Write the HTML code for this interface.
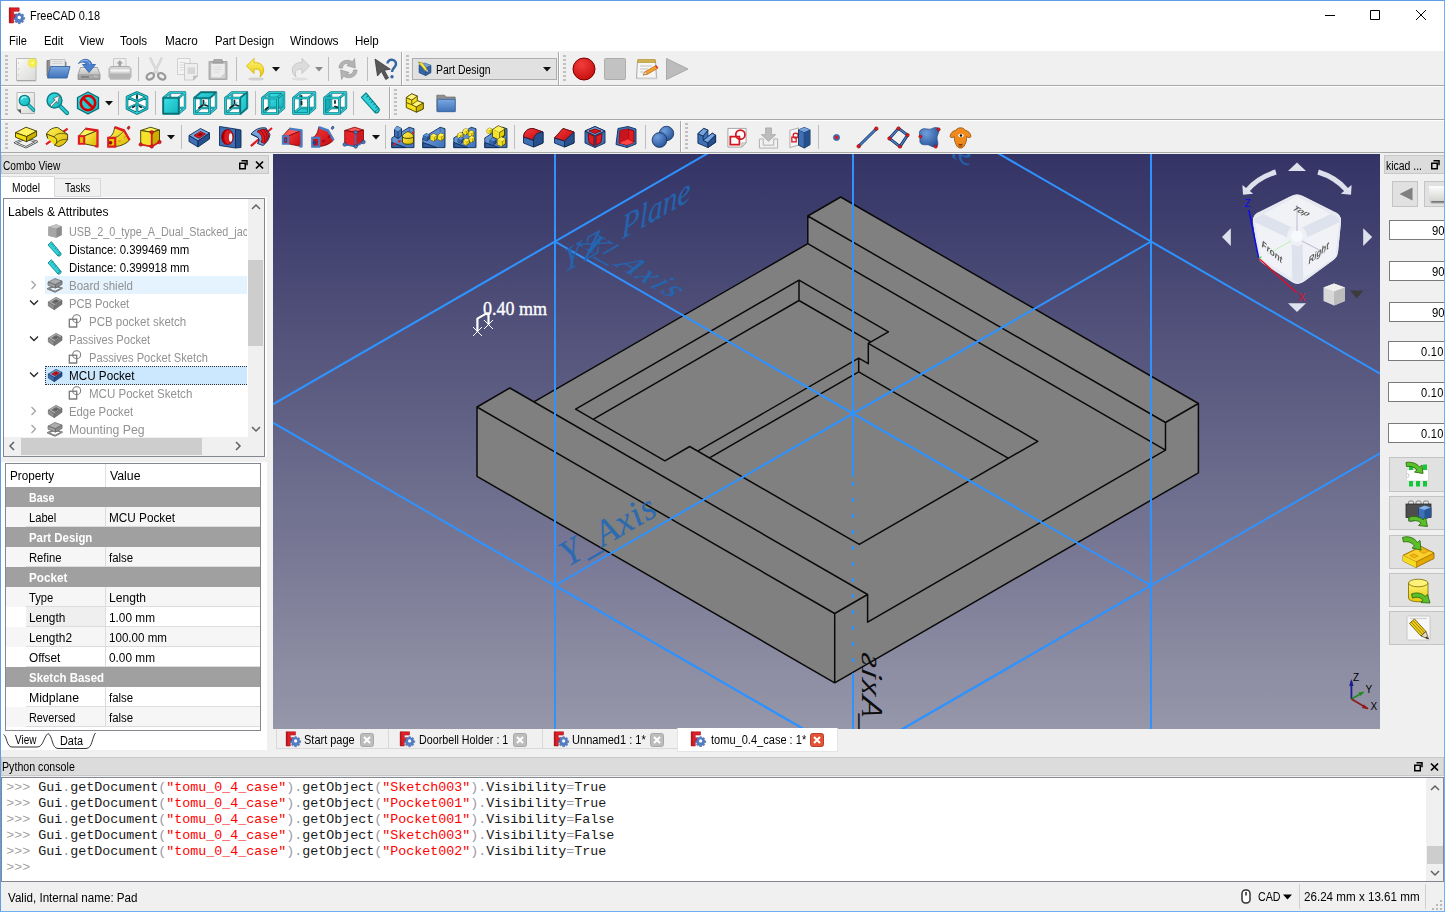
<!DOCTYPE html>
<html lang="en">
<head>
<meta charset="utf-8">
<title>FreeCAD 0.18</title>
<style>
*{box-sizing:border-box;margin:0;padding:0}
html,body{width:1445px;height:912px;overflow:hidden;background:#f0f0f0}
body{font-family:"Liberation Sans",sans-serif;font-size:12px;color:#000;position:relative}
.abs{position:absolute}
.t{position:absolute;white-space:nowrap;line-height:16px;height:16px}
svg{position:absolute;overflow:visible}
#win{position:absolute;left:0;top:0;width:1445px;height:912px;border-left:1px solid #5e9ee6;border-top:1px solid #5e9ee6;border-right:1px solid #6fb0f2;border-bottom:1px solid #6fb0f2}
#title{position:absolute;left:1px;top:1px;width:1443px;height:29px;background:#fff}
#menu{position:absolute;left:1px;top:30px;width:1443px;height:21px;background:#fff}
#menu .t{font-size:13px;top:3px}
.tbsep{position:absolute;left:1px;width:1443px;height:2px;border-top:1px solid #a8a8a8;border-bottom:1px solid #fff}
.vsep{position:absolute;width:1px;background:#bdbdbd}
.grip{position:absolute;width:3px;background:repeating-linear-gradient(180deg,#c0c0c0 0,#c0c0c0 2px,transparent 2px,transparent 4px)}
.con{font-family:"Liberation Mono",monospace;font-size:13.33px;white-space:pre}
.t{transform-origin:0 50%}
.docktitle{position:absolute;background:#dcdcdc;border:1px solid #c8c8c8;height:19px}
</style>
</head>
<body>
<div id="title"></div><div id="menu"></div>
<svg style="left:8px;top:7px" width="17" height="17" viewBox="0 0 16 16"><path d="M1.200 0.800h9.300v3.300H5.300v2.700h3.400v3.100H5.300V15H1.200z" fill="#e21f26" stroke="#8e1116" stroke-width=".5"/><path d="M1.200 0.800h1.300V15H1.200z" fill="#a8141a"/><g transform="translate(10.6,9.900) scale(.82)"><path d="M-1-5.200h2l.3 1.300 1.200.5 1.200-.8 1.400 1.400-.8 1.200.5 1.200 1.400.3v2l-1.400.3-.5 1.200.8 1.200-1.400 1.400-1.200-.8-1.200.5-.3 1.400h-2l-.3-1.400-1.200-.5-1.200.8-1.400-1.400.8-1.200-.5-1.200-1.400-.3v-2l1.400-.3.5-1.200-.8-1.200 1.400-1.400 1.200.8 1.200-.5z" fill="#557fc4" stroke="#2c4f8c" stroke-width=".5"/><circle r="1.900" fill="#fff"/></g></svg>
<div class="t" style="left:30.0px;top:8.3px;font-size:12.5px;transform:scaleX(0.8762);">FreeCAD 0.18</div>
<svg style="left:1325px;top:10px" width="110" height="14" viewBox="0 0 110 14"><path d="M0 5.500h10M45.500 0.500h9v9h-9zM91 0l10 10M101 0l-10 10" fill="none" stroke="#000" stroke-width="1"/></svg>
<div class="t" style="left:9.1px;top:32.5px;font-size:12.5px;transform:scaleX(0.8838);">File</div>
<div class="t" style="left:43.5px;top:32.5px;font-size:12.5px;transform:scaleX(0.8960);">Edit</div>
<div class="t" style="left:78.9px;top:32.5px;font-size:12.5px;transform:scaleX(0.9268);">View</div>
<div class="t" style="left:120.4px;top:32.5px;font-size:12.5px;transform:scaleX(0.9287);">Tools</div>
<div class="t" style="left:164.7px;top:32.5px;font-size:12.5px;transform:scaleX(0.9416);">Macro</div>
<div class="t" style="left:214.5px;top:32.5px;font-size:12.5px;transform:scaleX(0.9034);">Part Design</div>
<div class="t" style="left:290.0px;top:32.5px;font-size:12.5px;transform:scaleX(0.9565);">Windows</div>
<div class="t" style="left:355.4px;top:32.5px;font-size:12.5px;transform:scaleX(0.9258);">Help</div>
<svg width="0" height="0" style="position:absolute"><defs>
<linearGradient id="gPage" x1="0" y1="0" x2="1" y2="1"><stop offset="0" stop-color="#fbfbfb"/><stop offset="1" stop-color="#d9d9d6"/></linearGradient>
<linearGradient id="gBlueF" x1="0" y1="0" x2="0" y2="1"><stop offset="0" stop-color="#7ca8e0"/><stop offset="1" stop-color="#3f72bb"/></linearGradient>
<linearGradient id="gGrayV" x1="0" y1="0" x2="0" y2="1"><stop offset="0" stop-color="#e6e6e6"/><stop offset="1" stop-color="#a8a8a8"/></linearGradient>
<linearGradient id="gYel" x1="0" y1="0" x2="1" y2="1"><stop offset="0" stop-color="#fff15a"/><stop offset="1" stop-color="#d9b800"/></linearGradient>
<linearGradient id="gYelV" x1="0" y1="0" x2="0" y2="1"><stop offset="0" stop-color="#fff676"/><stop offset="1" stop-color="#e6c60a"/></linearGradient>
<linearGradient id="gRed" x1="0" y1="0" x2="1" y2="1"><stop offset="0" stop-color="#f33a3a"/><stop offset="1" stop-color="#c40810"/></linearGradient>
<linearGradient id="gBlue" x1="0" y1="0" x2="1" y2="1"><stop offset="0" stop-color="#6c9bd6"/><stop offset="1" stop-color="#2f5c9e"/></linearGradient>
<linearGradient id="gBlueL" x1="0" y1="0" x2="1" y2="1"><stop offset="0" stop-color="#7dabe4"/><stop offset="1" stop-color="#3d6fb8"/></linearGradient>
<linearGradient id="gBlueD" x1="0" y1="0" x2="1" y2="1"><stop offset="0" stop-color="#3d6cb0"/><stop offset="1" stop-color="#234a86"/></linearGradient>
<linearGradient id="gCyan" x1="0" y1="0" x2="1" y2="1"><stop offset="0" stop-color="#3be0e6"/><stop offset="1" stop-color="#15b4bc"/></linearGradient>
<radialGradient id="gGlow"><stop offset="0" stop-color="#ffffc0"/><stop offset=".45" stop-color="#f4ec30"/><stop offset="1" stop-color="#f4ec30" stop-opacity="0"/></radialGradient>
<radialGradient id="gBall" cx=".35" cy=".3" r=".8"><stop offset="0" stop-color="#6f9ede"/><stop offset="1" stop-color="#224f94"/></radialGradient>
<radialGradient id="gRec" cx=".4" cy=".3" r=".8"><stop offset="0" stop-color="#f23c3c"/><stop offset="1" stop-color="#c20a0a"/></radialGradient>
</defs></svg>
<div class="tbsep" style="top:85px"></div>
<div class="tbsep" style="top:119px"></div>
<div class="abs" style="left:1px;top:152px;width:1443px;height:1px;background:#a8a8a8"></div>
<div class="grip" style="left:5px;top:55px;height:28px"></div>
<svg style="left:15px;top:57px" width="24" height="24" viewBox="0 0 24 24"><path d="M1.500 1.500h19.500v22H1.500z" fill="url(#gPage)" stroke="#b4b4b4" stroke-width=".9"/><path d="M2 23.800h19" stroke="#9a9a9a" stroke-width=".8"/><path d="M3.500 5v2M3.500 11v2M3.500 17v2" stroke="#d0d0d0" stroke-width="1"/><circle cx="17.500" cy="6" r="6" fill="url(#gGlow)"/></svg>
<svg style="left:46px;top:57px" width="24" height="24" viewBox="0 0 24 24"><path d="M1 3.500h7.500l1.500 1.500h10v14H1z" fill="#8f8f8f" stroke="#6a6a6a" stroke-width=".8"/><path d="M4 2.500h15v11H4z" fill="#e8e8e8" stroke="#aaa" stroke-width=".6"/><path d="M6.500 4.500h10M6.500 6.500h10" stroke="#c8c8c8" stroke-width=".7"/><path d="M4.500 9.500h19.500l-3 11.500H1.500z" fill="url(#gBlueF)" stroke="#3465a4" stroke-width=".9"/></svg>
<svg style="left:77px;top:57px" width="24" height="24" viewBox="0 0 24 24"><path d="M3.500 10.500L1 17.500v5h22v-5L20.500 10.500z" fill="url(#gGrayV)" stroke="#9a9a9a" stroke-width=".9"/><path d="M1.500 17.800h21v4.200h-21z" fill="#a9a9a9" stroke="#8e8e8e" stroke-width=".6"/><path d="M4 20h8" stroke="#707070" stroke-width="1.300"/><path d="M17 19.300h3.500" stroke="#c8c8c8" stroke-width="1"/><path d="M1.500 6.500C4.500 1 13 .5 15 7.500h3.500L12 15.500 5.500 7.500H9C8 4.500 5 4.500 1.500 6.500z" fill="#4a80d0" stroke="#2a5aa4" stroke-width=".8" stroke-linejoin="round"/><path d="M3.500 5C6.500 2.500 11.500 2.500 13 7" stroke="#9cc0f0" stroke-width="1" fill="none"/></svg>
<svg style="left:108px;top:57px" width="24" height="24" viewBox="0 0 24 24"><path d="M5.500 1.500h12.500v9H5.500z" fill="#eeeeee" stroke="#c2c2c2" stroke-width=".8"/><path d="M11.800 3.200l3.200 3.300h-1.900v2.500h-2.600V6.500H8.600z" fill="#a2a2a2"/><path d="M4 9.500h16c2 0 3 1.500 3 3.500v6.500c0 1-.5 1.500-1.500 1.500h-19C1.500 21 1 20.500 1 19.500V13c0-2 1-3.500 3-3.500z" fill="#d4d4d4" stroke="#a8a8a8" stroke-width=".9"/><path d="M1.500 16.500h21v3.500c0 .6-.4 1-1 1h-19c-.6 0-1-.4-1-1z" fill="#b4b4b4"/><path d="M3.500 13.500h17" stroke="#f6f6f6" stroke-width="2" stroke-linecap="round"/><path d="M2 22h20" stroke="#9c9c9c" stroke-width="1"/></svg>
<div class="vsep" style="left:137.5px;top:57px;height:24px"></div>
<svg style="left:144px;top:57px" width="24" height="24" viewBox="0 0 24 24"><path d="M6.500 1.500l7 14M17.500 1.500l-7 14" stroke="#cdcdcd" stroke-width="2.300" fill="none" stroke-linecap="round"/><path d="M6.500 1.500l7 14M17.500 1.500l-7 14" stroke="#e4e4e4" stroke-width=".8" fill="none"/><ellipse cx="6.300" cy="19.300" rx="4" ry="2.900" fill="none" stroke="#9a9a9a" stroke-width="2.200" transform="rotate(-32 6.300 19.300)"/><ellipse cx="17.700" cy="19.300" rx="4" ry="2.900" fill="none" stroke="#9a9a9a" stroke-width="2.200" transform="rotate(32 17.700 19.300)"/></svg>
<svg style="left:175px;top:57px" width="24" height="24" viewBox="0 0 24 24"><path d="M2.500 1.500h12.500v16H2.500z" fill="#f4f4f4" stroke="#c8c8c8" stroke-width=".8"/><path d="M4.500 5.500h6M4.500 8h5M4.500 10.500h5M4.500 13h5" stroke="#d4d4d4" stroke-width=".8"/><path d="M9.500 6.500h13v12.500L18.500 23H9.500z" fill="#eeeeee" stroke="#c2c2c2" stroke-width=".8"/><path d="M12.500 10.500h7.500v6.500h-7.500z" fill="#d6d6d6"/><path d="M22.500 19h-4V23z" fill="#c0c0c0" stroke="#b0b0b0" stroke-width=".5"/></svg>
<svg style="left:206px;top:57px" width="24" height="24" viewBox="0 0 24 24"><path d="M3 4.500h18v18H3z" fill="#bdbdbd" stroke="#a4a4a4" stroke-width=".9"/><path d="M5.200 6.800h13.600v13.700H5.200z" fill="#ececec"/><path d="M8 2.500h8l1 3.500H7z" fill="#aaa" stroke="#949494" stroke-width=".7"/><path d="M7.500 10h8.500M7.500 12.500h8.500M7.500 15h6" stroke="#dadada" stroke-width="1"/><path d="M18.800 16v4.500h-4.500z" fill="#cfcfcf"/></svg>
<div class="vsep" style="left:236px;top:57px;height:24px"></div>
<svg style="left:243.5px;top:57px" width="24" height="24" viewBox="0 0 24 24"><ellipse cx="12" cy="22" rx="8" ry="1.600" fill="#000" opacity=".13"/><path d="M10 1.500L2.500 9l7.500 7.500v-4.300c5-.8 8 1.700 6 7.800 7-5.500 3.500-15.500-6-14.200z" fill="url(#gYelV)" stroke="#d8b800" stroke-width=".9" stroke-linejoin="round"/></svg>
<svg style="left:271.5px;top:67px" width="8" height="5" viewBox="0 0 8 5"><path d="M0 0h8L4 4.500z" fill="#111"/></svg>
<svg style="left:288px;top:57px" width="24" height="24" viewBox="0 0 24 24"><ellipse cx="12" cy="22" rx="8" ry="1.600" fill="#000" opacity=".07"/><path d="M14 1.500L21.500 9l-7.500 7.500v-4.300c-5-.8-8 1.700-6 7.800-7-5.500-3.500-15.500 6-14.200z" fill="#dcdcdc" stroke="#c4c4c4" stroke-width=".9" stroke-linejoin="round"/></svg>
<svg style="left:314.5px;top:67px" width="8" height="5" viewBox="0 0 8 5"><path d="M0 0h8L4 4.500z" fill="#8a8a8a"/></svg>
<div class="vsep" style="left:328px;top:57px;height:24px"></div>
<svg style="left:335.5px;top:57px" width="24" height="24" viewBox="0 0 24 24"><path d="M3 11C3 5.500 8 2.500 13.500 3.500l3 1.200 2-3.200.8 9.500-8.500-2.500 2.700-1.500C9 5.500 6.500 8 6.500 11z" fill="#b4b4b4" stroke="#9a9a9a" stroke-width=".7" stroke-linejoin="round"/><path d="M21 13c0 5.500-5 8.500-10.500 7.500l-3-1.200-2 3.200-.8-9.500 8.500 2.500-2.700 1.500C15 18.500 17.500 16 17.500 13z" fill="#b4b4b4" stroke="#9a9a9a" stroke-width=".7" stroke-linejoin="round"/></svg>
<div class="vsep" style="left:366.5px;top:57px;height:24px"></div>
<svg style="left:373px;top:57px" width="24" height="24" viewBox="0 0 24 24"><path d="M2 2l2.500 17 4-4.500 4.200 8 2.800-1.500-4.200-7.800 6-1z" fill="#595959" stroke="#3a3a3a" stroke-width=".8" stroke-linejoin="round"/><path d="M14.500 6.500C14.500 1.500 23 1.500 23 7c0 3.500-4 3.800-4 8" fill="none" stroke="#3465a4" stroke-width="2.500"/><circle cx="19" cy="19.800" r="1.700" fill="#3465a4"/></svg>
<div class="abs" style="left:401px;top:52px;width:2px;height:33px;border-left:1px solid #a8a8a8;border-right:1px solid #fff"></div>
<div class="grip" style="left:406px;top:55px;height:28px"></div>
<div class="abs" style="left:412px;top:58px;width:145px;height:22px;background:#e1e1e1;border:1px solid #adadad"></div>
<svg style="left:417px;top:61px" width="16" height="16" viewBox="0 0 24 24"><path d="M3 6l8-3 10 3.500v11L13 22 3 17.500z" fill="#3465a4" stroke="#1b3d6e" stroke-width=".8"/><path d="M3 6l10 4 8-3.500M13 10v12" stroke="#1b3d6e" stroke-width=".8" fill="none"/><path d="M3 6l8-3 10 3.500-8 3.500z" fill="#729fcf"/><path d="M2 1.500l6.500 1.500 7 9.500-3 2.500-7.500-9z" fill="#f4e34a" stroke="#6d5c00" stroke-width=".7"/><path d="M12.500 15l3-2.500 1.500 4.500z" fill="#fff" stroke="#333" stroke-width=".6"/></svg>
<div class="t" style="left:435.5px;top:61.7px;transform:scaleX(0.8693);">Part Design</div>
<svg style="left:543px;top:67px" width="8" height="5" viewBox="0 0 8 5"><path d="M0 0h8L4 4.500z" fill="#111"/></svg>
<div class="abs" style="left:558px;top:52px;width:2px;height:33px;border-left:1px solid #a8a8a8;border-right:1px solid #fff"></div>
<div class="grip" style="left:563px;top:55px;height:28px"></div>
<svg style="left:572.3px;top:57px" width="24" height="24" viewBox="0 0 24 24"><circle cx="12" cy="12" r="11" fill="url(#gRec)" stroke="#7a0000" stroke-width="1"/></svg>
<svg style="left:603.2px;top:57px" width="24" height="24" viewBox="0 0 24 24"><rect x="1.500" y="1.500" width="21" height="21" rx="1" fill="#c2c2c2" stroke="#adadad" stroke-width="1"/></svg>
<svg style="left:634.5px;top:57px" width="24" height="24" viewBox="0 0 24 24"><path d="M2.500 4h18l1 17.500h-20z" fill="#f6f6f4" stroke="#a0a0a0" stroke-width=".9"/><path d="M2.800 2.500h17.500v3H2.800z" fill="#d4b24a" stroke="#a88a2a" stroke-width=".6"/><path d="M5 9h12M5 12h8M5 15h6" stroke="#c2c2c2" stroke-width="1"/><path d="M2 20.500h20.500v1.800H2z" fill="#cfcfcf"/><path d="M8 18l2.500-3.500L21 8.500l2 2.500-10.500 6.200z" fill="#f5a030" stroke="#b45f06" stroke-width=".7"/><path d="M20 9l1.300-.8 2 2.500-1.300.8z" fill="#e03030"/><path d="M8 18l2.500-3.500 1.800 2.600z" fill="#f5deb0" stroke="#8a6a3a" stroke-width=".5"/></svg>
<svg style="left:664.7px;top:57px" width="24" height="24" viewBox="0 0 24 24"><path d="M1.500 1.500v21L23 12z" fill="#bcbcbc" stroke="#a9a9a9" stroke-width="1"/></svg>
<div class="grip" style="left:5px;top:89px;height:28px"></div>
<svg style="left:14px;top:90.5px" width="24" height="24" viewBox="0 0 24 24"><path d="M3 1.500h17.500v21H7l-4-4z" fill="url(#gPage)" stroke="#a8a8a8" stroke-width=".8"/><path d="M3 18.500h4v4z" fill="#555"/><path d="M13 12.500l6.500 6.500" stroke="#0c7f87" stroke-width="3.600" stroke-linecap="round"/><path d="M13 12.500l6.500 6.500" stroke="#27c8d0" stroke-width="2" stroke-linecap="round"/><circle cx="10.500" cy="9.500" r="5.200" fill="url(#gCyan)" stroke="#0c7f87" stroke-width="1.300"/><path d="M7.500 8.500a3.300 3.300 0 0 1 5-2" stroke="#b6f4f6" stroke-width="1.100" fill="none"/></svg>
<svg style="left:45px;top:90.5px" width="24" height="24" viewBox="0 0 24 24"><path d="M14 14l8 8" stroke="#0c7f87" stroke-width="4.200" stroke-linecap="round"/><path d="M14 14l8 8" stroke="#27c8d0" stroke-width="2.400" stroke-linecap="round"/><circle cx="9.500" cy="9.500" r="7.400" fill="url(#gCyan)" stroke="#0c7f87" stroke-width="1.500"/><path d="M14.500 4.500L8 7.500l2.200 1.300L5 14l1.500 1.500 5-5.200 1.300 2.200z" fill="#f2f2f2" stroke="#555" stroke-width=".7" stroke-linejoin="round"/></svg>
<svg style="left:76px;top:90.5px" width="24" height="24" viewBox="0 0 24 24"><path d="M12 1l10.500 5.500v11L12 23 1.500 17.500v-11z" fill="url(#gCyan)" stroke="#0a6c73" stroke-width="1.300" stroke-linejoin="round"/><circle cx="12" cy="12" r="7.200" fill="none" stroke="#d40000" stroke-width="2.600"/><path d="M7 7l10 10" stroke="#d40000" stroke-width="2.600"/></svg>
<svg style="left:105px;top:100.5px" width="8" height="5" viewBox="0 0 8 5"><path d="M0 0h8L4 4.500z" fill="#111"/></svg>
<div class="vsep" style="left:118px;top:91px;height:24px"></div>
<svg style="left:125px;top:90.5px" width="24" height="24" viewBox="0 0 24 24"><path d="M12 1.500l10 4.500v11.500l-10 5-10-5V6z" fill="#fff" opacity=".9"/><path d="M12 1.500V13M2 17.500L12 13l10 4.500" stroke="#0b6f77" stroke-width="2.200" fill="none" opacity=".85"/><path d="M12 1.500V13M2 17.500L12 13l10 4.500" stroke="#27ccd4" stroke-width="1" fill="none"/><path d="M12 4.500v2.500M7.800 16.300l1.700-1M16.200 16.300l-1.700-1" stroke="#102a2c" stroke-width="1.600" stroke-linecap="round"/><path d="M12 1.500l10 4.500v11.500l-10 5-10-5V6z M2 6l10 4.500L22 6M12 10.500v12" stroke="#0b6f77" stroke-width="2.600" fill="none" stroke-linejoin="round"/><path d="M12 1.500l10 4.500v11.500l-10 5-10-5V6z M2 6l10 4.500L22 6M12 10.500v12" stroke="#27ccd4" stroke-width="1.300" fill="none" stroke-linejoin="round"/></svg>
<div class="vsep" style="left:155px;top:91px;height:24px"></div>
<svg style="left:162px;top:90.5px" width="24" height="24" viewBox="0 0 24 24"><path d="M1.500 7L8 1.500h15V17l-6.500 5.500h-15z" fill="#fff" opacity=".92"/><path d="M8 1.500h15v15.500h-15z M1.500 7L8 1.500M16.500 7L23 1.500M16.500 22.500L23 17M1.500 22.500L8 17" stroke="#0b6f77" stroke-width="2.400" fill="none" stroke-linejoin="round" opacity=".9"/><path d="M8 1.500h15v15.500h-15z M1.500 7L8 1.500M16.500 7L23 1.500M16.500 22.500L23 17M1.500 22.500L8 17" stroke="#27ccd4" stroke-width="1.200" fill="none" stroke-linejoin="round"/><path d="M1.500 7h15v15.500h-15z" stroke="#0b6f77" stroke-width="2.600" fill="none" stroke-linejoin="round"/><path d="M1.500 7h15v15.500h-15z" stroke="#27ccd4" stroke-width="1.300" fill="none" stroke-linejoin="round"/><path d="M1.500 7h15v15.500h-15z" fill="url(#gCyan)" stroke="#0b6f77" stroke-width="1.300"/></svg>
<svg style="left:193px;top:90.5px" width="24" height="24" viewBox="0 0 24 24"><path d="M1.500 7L8 1.500h15V17l-6.500 5.500h-15z" fill="#fff" opacity=".92"/><path d="M8 1.500h15v15.500h-15z M1.500 7L8 1.500M16.500 7L23 1.500M16.500 22.500L23 17M1.500 22.500L8 17" stroke="#0b6f77" stroke-width="2.400" fill="none" stroke-linejoin="round" opacity=".9"/><path d="M8 1.500h15v15.500h-15z M1.500 7L8 1.500M16.500 7L23 1.500M16.500 22.500L23 17M1.500 22.500L8 17" stroke="#27ccd4" stroke-width="1.200" fill="none" stroke-linejoin="round"/><path d="M10.500 13.500L6 17M10.500 13.500l4.500 1.500M10.500 13.500V9.500" stroke="#102a2c" stroke-width="1.700" stroke-linecap="round"/><path d="M10.500 13.500l3-2" stroke="#27ccd4" stroke-width="1"/><path d="M1.500 7h15v15.500h-15z" stroke="#0b6f77" stroke-width="2.600" fill="none" stroke-linejoin="round"/><path d="M1.500 7h15v15.500h-15z" stroke="#27ccd4" stroke-width="1.300" fill="none" stroke-linejoin="round"/><path d="M1.500 7L8 1.500h15L16.500 7z" fill="url(#gCyan)" stroke="#0b6f77" stroke-width="1.300" stroke-linejoin="round"/></svg>
<svg style="left:223.7px;top:90.5px" width="24" height="24" viewBox="0 0 24 24"><path d="M1.500 7L8 1.500h15V17l-6.500 5.500h-15z" fill="#fff" opacity=".92"/><path d="M8 1.500h15v15.500h-15z M1.500 7L8 1.500M16.500 7L23 1.500M16.500 22.500L23 17M1.500 22.500L8 17" stroke="#0b6f77" stroke-width="2.400" fill="none" stroke-linejoin="round" opacity=".9"/><path d="M8 1.500h15v15.500h-15z M1.500 7L8 1.500M16.500 7L23 1.500M16.500 22.500L23 17M1.500 22.500L8 17" stroke="#27ccd4" stroke-width="1.200" fill="none" stroke-linejoin="round"/><path d="M10.500 13.500L6 17M10.500 13.500l4.500 1.500M10.500 13.500V9.500" stroke="#102a2c" stroke-width="1.700" stroke-linecap="round"/><path d="M10.500 13.500l3-2" stroke="#27ccd4" stroke-width="1"/><path d="M1.500 7h15v15.500h-15z" stroke="#0b6f77" stroke-width="2.600" fill="none" stroke-linejoin="round"/><path d="M1.500 7h15v15.500h-15z" stroke="#27ccd4" stroke-width="1.300" fill="none" stroke-linejoin="round"/><path d="M16.500 7L23 1.500V17l-6.500 5.500z" fill="url(#gCyan)" stroke="#0b6f77" stroke-width="1.300"/></svg>
<div class="vsep" style="left:254.5px;top:91px;height:24px"></div>
<svg style="left:261px;top:90.5px" width="24" height="24" viewBox="0 0 24 24"><path d="M1.500 7L8 1.500h15V17l-6.500 5.500h-15z" fill="#fff" opacity=".92"/><path d="M8 1.500h15V17H8z" fill="url(#gCyan)"/><path d="M8 1.500h15v15.500h-15z M1.500 7L8 1.500M16.500 7L23 1.500M16.500 22.500L23 17M1.500 22.500L8 17" stroke="#0b6f77" stroke-width="2.400" fill="none" stroke-linejoin="round" opacity=".9"/><path d="M8 1.500h15v15.500h-15z M1.500 7L8 1.500M16.500 7L23 1.500M16.500 22.500L23 17M1.500 22.500L8 17" stroke="#27ccd4" stroke-width="1.200" fill="none" stroke-linejoin="round"/><path d="M7 16.500L4.500 18.500" stroke="#102a2c" stroke-width="2" stroke-linecap="round"/><path d="M1.500 7h15v15.500h-15z" stroke="#0b6f77" stroke-width="2.600" fill="none" stroke-linejoin="round"/><path d="M1.500 7h15v15.500h-15z" stroke="#27ccd4" stroke-width="1.300" fill="none" stroke-linejoin="round"/></svg>
<svg style="left:292px;top:90.5px" width="24" height="24" viewBox="0 0 24 24"><path d="M1.500 7L8 1.500h15V17l-6.500 5.500h-15z" fill="#fff" opacity=".92"/><path d="M1.500 22.500L8 17h15l-6.500 5.500z" fill="url(#gCyan)"/><path d="M8 1.500h15v15.500h-15z M1.500 7L8 1.500M16.500 7L23 1.500M16.500 22.500L23 17M1.500 22.500L8 17" stroke="#0b6f77" stroke-width="2.400" fill="none" stroke-linejoin="round" opacity=".9"/><path d="M8 1.500h15v15.500h-15z M1.500 7L8 1.500M16.500 7L23 1.500M16.500 22.500L23 17M1.500 22.500L8 17" stroke="#27ccd4" stroke-width="1.200" fill="none" stroke-linejoin="round"/><path d="M9.500 5v3M9.500 10.500v3" stroke="#102a2c" stroke-width="1.800" stroke-linecap="round"/><path d="M1.500 7h15v15.500h-15z" stroke="#0b6f77" stroke-width="2.600" fill="none" stroke-linejoin="round"/><path d="M1.500 7h15v15.500h-15z" stroke="#27ccd4" stroke-width="1.300" fill="none" stroke-linejoin="round"/></svg>
<svg style="left:322.7px;top:90.5px" width="24" height="24" viewBox="0 0 24 24"><path d="M1.500 7L8 1.500h15V17l-6.500 5.500h-15z" fill="#fff" opacity=".92"/><path d="M1.500 7L8 1.500V17l-6.500 5.500z" fill="#1aaab2"/><path d="M8 1.500h15v15.500h-15z M1.500 7L8 1.500M16.500 7L23 1.500M16.500 22.500L23 17M1.500 22.500L8 17" stroke="#0b6f77" stroke-width="2.400" fill="none" stroke-linejoin="round" opacity=".9"/><path d="M8 1.500h15v15.500h-15z M1.500 7L8 1.500M16.500 7L23 1.500M16.500 22.500L23 17M1.500 22.500L8 17" stroke="#27ccd4" stroke-width="1.200" fill="none" stroke-linejoin="round"/><path d="M12 15.500l2.500.8M12 12v-2" stroke="#102a2c" stroke-width="1.800" stroke-linecap="round"/><path d="M1.500 7h15v15.500h-15z" stroke="#0b6f77" stroke-width="2.600" fill="none" stroke-linejoin="round"/><path d="M1.500 7h15v15.500h-15z" stroke="#27ccd4" stroke-width="1.300" fill="none" stroke-linejoin="round"/></svg>
<div class="vsep" style="left:353.2px;top:91px;height:24px"></div>
<svg style="left:359.5px;top:91.5px" width="22" height="22" viewBox="0 0 24 24"><path d="M6.500 1L1.500 6l15 16.500c3 1 5-1.500 4.500-4z" fill="#2fd0d8" stroke="#0a7f87" stroke-width="1.200" stroke-linejoin="round"/><path d="M16.500 22.500c.5-2.500 2-4 4.500-4" stroke="#0a7f87" stroke-width="1" fill="none"/><path d="M9 4l-2 2M11.500 7L10 8.500M14 9.800l-2 2M16.500 12.500L15 14M19 15.300l-2 2" stroke="#0a5a60" stroke-width="1"/></svg>
<div class="abs" style="left:389px;top:87px;width:2px;height:32px;border-left:1px solid #a8a8a8;border-right:1px solid #fff"></div>
<div class="grip" style="left:394px;top:89px;height:28px"></div>
<svg style="left:404px;top:91.5px" width="22" height="22" viewBox="0 0 24 24"><path d="M8.500 2l6 2.500v5l6.500 2.500v6.500L13.500 22 2.500 17V6z" fill="#f4e11c" stroke="#4a4200" stroke-width="1" stroke-linejoin="round"/><path d="M2.500 6l6 2.800 6-4.300M8.500 8.800v5l5 2.500 7.500-4.300M13.500 16.300V22M2.500 11.500l6 2.300" stroke="#4a4200" stroke-width=".9" fill="none"/><path d="M8.500 2l6 2.500-6 4.300-6-2.800z" fill="#fff47c" stroke="#4a4200" stroke-width=".8"/><path d="M8.500 13.800l5 2.500 7.500-4.300-6.500-2.500z" fill="#fff47c" stroke="#4a4200" stroke-width=".8"/><path d="M13.500 16.300l7.500-4.300v6.500L13.500 22z" fill="#cdb400" stroke="#4a4200" stroke-width=".8"/></svg>
<svg style="left:435px;top:91.5px" width="22" height="22" viewBox="0 0 24 24"><path d="M2 3.500h8.500l1.500 2H22v15.500H2z" fill="#8e8e8e" stroke="#6a6a6a" stroke-width=".8"/><path d="M2.500 8h19.500v13.500H2.500z" fill="url(#gBlueF)" stroke="#3465a4" stroke-width=".9"/></svg>
<div class="grip" style="left:5px;top:123px;height:28px"></div>
<svg style="left:14px;top:125px" width="24" height="24" viewBox="0 0 24 24"><path d="M1.200 17.700L11.500 13.500 22.600 16.700 12 22.200z" fill="none" stroke="#3c4042" stroke-width="2.300" stroke-linejoin="round"/><path d="M1.200 17.700L11.500 13.500 22.600 16.700 12 22.200z" fill="none" stroke="#ececec" stroke-width=".9"/><path d="M1.500 7.700L12 2.200l10.600 3.900L12.600 11.600z" fill="#fff25e" stroke="#3e3800" stroke-width=".9" stroke-linejoin="round"/><path d="M1.500 7.700l11.100 3.900v5.100L1.500 12.200z" fill="#f2de14" stroke="#3e3800" stroke-width=".9" stroke-linejoin="round"/><path d="M12.600 11.600l10-5.500v5L12.600 16.700z" fill="#c9ae00" stroke="#3e3800" stroke-width=".9" stroke-linejoin="round"/></svg>
<svg style="left:45px;top:125px" width="24" height="24" viewBox="0 0 24 24"><path d="M1 19.400L22.600 3.700" stroke="#e01a22" stroke-width="2.100"/><path d="M1.500 8.900C4 4.500 8.500 2.300 12.600 2.500L22.600 9.400V14.400C21 18 17 21 13.700 21.600L9.300 20C10.500 18 10.300 16.300 8.700 15.500L2.700 13.300Z" fill="url(#gYel)" stroke="#3e3800" stroke-width=".9" stroke-linejoin="round"/><path d="M2.700 13.300L1.500 8.900l7.500 3c2.500 1 3.500 3.500 2.300 6.600L9.300 20" fill="#f0dc20" stroke="#3e3800" stroke-width=".9" stroke-linejoin="round"/><path d="M9 11.900C12 7.500 17.500 8 22.600 9.400M11.300 18.500c1.500-2.500 6-4.500 11.300-4.100" fill="none" stroke="#3e3800" stroke-width=".7"/></svg>
<svg style="left:76px;top:125px" width="24" height="24" viewBox="0 0 24 24"><path d="M2.700 11.100L9.300 3.700l12.200 1.800L8.200 11.100z" fill="#fff25e" stroke="#3e3800" stroke-width=".9" stroke-linejoin="round"/><path d="M8.200 11.100L21.500 5.500v16.100L8.200 18.800z" fill="url(#gYel)" stroke="#3e3800" stroke-width=".9" stroke-linejoin="round"/><path d="M9.300 3.700l12.200 1.800v16.100l-2.500-.6" fill="none" stroke="#e01a22" stroke-width="2.300" stroke-linejoin="round"/><path d="M2.900 11.300h5.300v7.500H2.900z" fill="#f2de14" stroke="#e01a22" stroke-width="2.100"/><path d="M4.600 13.300h2v3.500h-2z" fill="none" stroke="#c89a00" stroke-width=".7"/></svg>
<svg style="left:107px;top:125px" width="24" height="24" viewBox="0 0 24 24"><path d="M1 12.700C5 11.500 7 7.500 7.600 2.200L17 5.500l5.600 9.500c-3 3.500-8 6-14.400 6.600z" fill="url(#gYel)" stroke="#3e3800" stroke-width=".9" stroke-linejoin="round"/><path d="M8.200 12.700C12 11 15 8.500 17 5.500" fill="none" stroke="#3e3800" stroke-width=".7"/><path d="M7.600 2.200L17 5.500l5.600 9.500" fill="none" stroke="#e01a22" stroke-width="2.400" stroke-linejoin="round"/><path d="M1.200 12.900h7v8.700h-7z" fill="#e8c800" stroke="#e01a22" stroke-width="2.100"/><circle cx="3.500" cy="17.700" r="1.500" fill="#a80000" stroke="#600" stroke-width=".5"/><ellipse cx="12.500" cy="16" rx="1.900" ry="1" fill="#e9a21a" transform="rotate(-25 12.500 16)"/><ellipse cx="18" cy="11.600" rx="1.700" ry=".9" fill="#e9a21a" transform="rotate(-50 18 11.600)"/><ellipse cx="21.600" cy="2.800" rx="1.200" ry="1.700" fill="#e01a22" stroke="#7a0000" stroke-width=".5" transform="rotate(25 21.600 2.800)"/></svg>
<svg style="left:138px;top:125px" width="24" height="24" viewBox="0 0 24 24"><path d="M2.700 5.500L12.600 2.200l8.900 2.800-7.800 2.200z" fill="#fff25e" stroke="#3e3800" stroke-width=".9" stroke-linejoin="round"/><path d="M2.700 5.500l11 1.700v14.300l-11-2z" fill="#f6e22a" stroke="#3e3800" stroke-width=".9" stroke-linejoin="round"/><path d="M13.700 7.200L21.500 5v12l-7.800 4.500z" fill="#c9ae00" stroke="#3e3800" stroke-width=".9" stroke-linejoin="round"/><path d="M2.700 19.500l11 2 7.800-4.500M13.700 7.200v14.300" fill="none" stroke="#e01a22" stroke-width="1.700"/><circle cx="2.7" cy="19.5" r="1.800" fill="#e01a22" stroke="#7a0000" stroke-width=".4"/><circle cx="13.7" cy="21.5" r="1.800" fill="#e01a22" stroke="#7a0000" stroke-width=".4"/><circle cx="21.5" cy="17" r="1.800" fill="#e01a22" stroke="#7a0000" stroke-width=".4"/><circle cx="13.7" cy="7.2" r="1.800" fill="#e01a22" stroke="#7a0000" stroke-width=".4"/></svg>
<svg style="left:167px;top:135px" width="8" height="5" viewBox="0 0 8 5"><path d="M0 0h8L4 4.500z" fill="#111"/></svg>
<div class="vsep" style="left:180.5px;top:125px;height:24px"></div>
<svg style="left:187px;top:125px" width="24" height="24" viewBox="0 0 24 24"><path d="M2 10.500L13.500 3.500 22.500 8 11 16z" fill="#77a3dc" stroke="#0f2c57" stroke-width=".9" stroke-linejoin="round"/><path d="M2 10.500l9 5.500v6l-9-5.500z" fill="#3f70b6" stroke="#0f2c57" stroke-width=".9" stroke-linejoin="round"/><path d="M11 16l11.500-8v6L11 22z" fill="#274f8c" stroke="#0f2c57" stroke-width=".9" stroke-linejoin="round"/><path d="M7 10.500l6.500-4 5 2.500-6.500 4.300z" fill="#e01a22" stroke="#7a0000" stroke-width=".7"/><path d="M9.500 10.600l4-2.500 2.500 1.300-2 1.400z" fill="#8a0008"/></svg>
<svg style="left:218px;top:125px" width="24" height="24" viewBox="0 0 24 24"><path d="M1.500 1.500l16 2.500v19L1.500 20.500z" fill="#3f70b6" stroke="#0f2c57" stroke-width=".9" stroke-linejoin="round"/><path d="M17.500 4l5.500 1v17.500l-5.500.5z" fill="#274f8c" stroke="#0f2c57" stroke-width=".9" stroke-linejoin="round"/><ellipse cx="9.500" cy="12" rx="5.800" ry="7.500" fill="#e01a22" stroke="#7a0000" stroke-width=".8"/><ellipse cx="12.600" cy="12.500" rx="1.700" ry="4.300" fill="#fff" opacity=".95"/><path d="M9.500 4.500C5.500 5 3.700 8 3.700 12s1.800 7 5.800 7.500c-2.500-1.500-3.300-4.500-3.300-7.500s.8-6 3.300-7.500z" fill="#a00008"/></svg>
<svg style="left:249px;top:125px" width="24" height="24" viewBox="0 0 24 24"><path d="M2 21L23 3" stroke="#e01a22" stroke-width="2"/><path d="M2 9C6 4 12 2 17 3l4 6.500c-1 5-3 8-7 11l-5.500-2c2.500-3 1.500-6-1.500-7z" fill="#77a3dc" stroke="#0f2c57" stroke-width=".9" stroke-linejoin="round"/><path d="M8 6.500c3-2 6.500-2.500 9-2l3 5.500c-.8 3.500-2 6-4.500 8.500l-3.500-1.500c2-3.500 1-8-4-10.500z" fill="#e01a22" stroke="#7a0000" stroke-width=".8" stroke-linejoin="round"/><path d="M11 5c3 2.500 5.500 6 4.500 12M14 4c3 3 4.500 6 4 11" stroke="#7a0000" stroke-width=".7" fill="none"/><path d="M2 9l5 2.500c3 1 4 4 1.500 7" fill="none" stroke="#0f2c57" stroke-width=".9" stroke-linejoin="round"/><path d="M2 21l4.500-3.900" stroke="#e01a22" stroke-width="2"/></svg>
<svg style="left:280px;top:125px" width="24" height="24" viewBox="0 0 24 24"><path d="M2.700 11.100L9.300 3.700l12.200 1.800L8.200 11.100z" fill="#f55" stroke="#7a0000" stroke-width=".8" stroke-linejoin="round"/><path d="M8.200 11.100L21.500 5.500v16.100L8.200 18.800z" fill="url(#gRed)" stroke="#7a0000" stroke-width=".8" stroke-linejoin="round"/><path d="M9.300 3.700l12.200 1.800v16.100l-2.500-.6" fill="none" stroke="#4a7cc4" stroke-width="2.300" stroke-linejoin="round"/><path d="M2.900 11.300h5.300v7.500H2.900z" fill="#d8141c" stroke="#4a7cc4" stroke-width="2.100"/><path d="M4.600 13.300h2v3.500h-2z" fill="#3f70b6" stroke="#0f2c57" stroke-width=".5"/></svg>
<svg style="left:311px;top:125px" width="24" height="24" viewBox="0 0 24 24"><path d="M1 12.700C5 11.500 7 7.500 7.600 2.200L17 5.500l5.600 9.500c-3 3.500-8 6-14.400 6.600z" fill="url(#gRed)" stroke="#7a0000" stroke-width=".8" stroke-linejoin="round"/><path d="M7.600 2.200L17 5.500l5.600 9.500" fill="none" stroke="#4a7cc4" stroke-width="2.400" stroke-linejoin="round"/><path d="M1.200 12.900h7v8.700h-7z" fill="#c8141c" stroke="#4a7cc4" stroke-width="2.100"/><circle cx="3.500" cy="17.700" r="1.500" fill="#274f8c" stroke="#0f2c57" stroke-width=".5"/><ellipse cx="12.500" cy="16" rx="1.900" ry="1" fill="#a00c12" transform="rotate(-25 12.500 16)"/><ellipse cx="18" cy="11.600" rx="1.700" ry=".9" fill="#a00c12" transform="rotate(-50 18 11.600)"/><ellipse cx="21.600" cy="2.800" rx="1.100" ry="1.600" fill="#4a7cc4" stroke="#0f2c57" stroke-width=".6" transform="rotate(25 21.600 2.800)"/></svg>
<svg style="left:342px;top:125px" width="24" height="24" viewBox="0 0 24 24"><path d="M2.700 5.500L12.600 2.200l8.900 2.800-7.800 2.200z" fill="#f55" stroke="#7a0000" stroke-width=".8" stroke-linejoin="round"/><path d="M2.700 5.500l11 1.700v14.300l-11-2z" fill="#e8222a" stroke="#7a0000" stroke-width=".8" stroke-linejoin="round"/><path d="M13.700 7.200L21.500 5v12l-7.800 4.500z" fill="#d01820" stroke="#7a0000" stroke-width=".8" stroke-linejoin="round"/><path d="M2.700 19.500l11 2 7.800-4.500M13.700 7.200v14.300" fill="none" stroke="#3f70b6" stroke-width="1.600"/><circle cx="2.7" cy="19.5" r="1.800" fill="#4a7cc4" stroke="#0f2c57" stroke-width=".5"/><circle cx="13.7" cy="21.5" r="1.800" fill="#4a7cc4" stroke="#0f2c57" stroke-width=".5"/><circle cx="21.5" cy="17" r="1.800" fill="#4a7cc4" stroke="#0f2c57" stroke-width=".5"/><circle cx="13.7" cy="7.2" r="1.800" fill="#4a7cc4" stroke="#0f2c57" stroke-width=".5"/></svg>
<svg style="left:371.5px;top:135px" width="8" height="5" viewBox="0 0 8 5"><path d="M0 0h8L4 4.500z" fill="#111"/></svg>
<div class="vsep" style="left:384.5px;top:125px;height:24px"></div>
<svg style="left:391px;top:125px" width="24" height="24" viewBox="0 0 24 24"><path d="M.8 12.900L18.200 2.300 23 3.700V22.600H.8z" fill="url(#gBlueL)" stroke="#0f2c57" stroke-width=".9" stroke-linejoin="round"/><path d="M.8 17.500L15 22.600H.8z" fill="#2f5c9e" stroke="#0f2c57" stroke-width=".9" stroke-linejoin="round"/><path d="M18.200 2.300V7" stroke="#0f2c57" stroke-width=".6" opacity=".6"/><path d="M3.500 4.500L6 1.200l4.500 2.300V11L7 13.500 3.500 11.500z" fill="#3f70b6" stroke="#0f2c57" stroke-width=".9" stroke-linejoin="round"/><path d="M3.500 4.500L7 6.500l3.500-3M7 6.500v7" stroke="#0f2c57" stroke-width=".7" fill="none"/><path d="M3.500 4.500L6 1.200l4.500 2.300L7 6.500z" fill="#77a3dc"/><path d="M2.500 20L23 7" stroke="#e01a22" stroke-width="1.900" stroke-dasharray="3 2.500"/><path d="M11.500 11.500c0-2 1.500-3 5.500-5 4 2 5.500 3 5.500 5v5.500c0 3-11 3-11 0z" fill="url(#gYel)" stroke="#3e3800" stroke-width=".9" stroke-linejoin="round"/><path d="M11.500 11.500c0 2.500 11 2.500 11 0" fill="none" stroke="#3e3800" stroke-width=".9" stroke-linejoin="round"/></svg>
<svg style="left:422px;top:125px" width="24" height="24" viewBox="0 0 24 24"><path d="M.8 12.900L18.200 2.300 23 3.700V22.600H.8z" fill="url(#gBlueL)" stroke="#0f2c57" stroke-width=".9" stroke-linejoin="round"/><path d="M.8 17.500L15 22.600H.8z" fill="#2f5c9e" stroke="#0f2c57" stroke-width=".9" stroke-linejoin="round"/><path d="M18.200 2.300V7" stroke="#0f2c57" stroke-width=".6" opacity=".6"/><g transform="translate(1.3,8.5) scale(1)"><path d="M0 2l3-2 3.500 1.500v3.700l-3 2.300L0 6z" fill="#274f8c" stroke="#0f2c57" stroke-width=".7" stroke-linejoin="round"/><path d="M0 2l3-2 3.500 1.500-3 2z" fill="#5b8ed6"/><path d="M0 2l3.500 1.500V7.500L0 6z" fill="#3566ac"/></g><g transform="translate(8.5,8.7) scale(1)"><path d="M0 2l3-2 3.500 1.500v3.700l-3 2.300L0 6z" fill="#e6cf0a" stroke="#3e3800" stroke-width=".7" stroke-linejoin="round"/><path d="M0 2l3.500 1.500 3-2M3.500 3.500V7.500" stroke="#3e3800" stroke-width=".6" fill="none"/><path d="M0 2l3-2 3.500 1.500-3 2z" fill="#fff15a"/><path d="M0 2l3.500 1.500V7.500L0 6z" fill="#f6e22a"/></g><g transform="translate(15.8,8.3) scale(1)"><path d="M0 2l3-2 3.500 1.500v3.700l-3 2.300L0 6z" fill="#e6cf0a" stroke="#3e3800" stroke-width=".7" stroke-linejoin="round"/><path d="M0 2l3.500 1.500 3-2M3.500 3.500V7.500" stroke="#3e3800" stroke-width=".6" fill="none"/><path d="M0 2l3-2 3.500 1.500-3 2z" fill="#fff15a"/><path d="M0 2l3.500 1.500V7.500L0 6z" fill="#f6e22a"/></g></svg>
<svg style="left:453px;top:125px" width="24" height="24" viewBox="0 0 24 24"><path d="M.8 12.900L18.200 2.300 23 3.700V22.600H.8z" fill="url(#gBlueL)" stroke="#0f2c57" stroke-width=".9" stroke-linejoin="round"/><path d="M.8 17.500L15 22.600H.8z" fill="#2f5c9e" stroke="#0f2c57" stroke-width=".9" stroke-linejoin="round"/><path d="M18.200 2.300V7" stroke="#0f2c57" stroke-width=".6" opacity=".6"/><g transform="translate(10,3.5) scale(0.85)"><path d="M0 2l3-2 3.500 1.500v3.700l-3 2.300L0 6z" fill="#e6cf0a" stroke="#3e3800" stroke-width=".7" stroke-linejoin="round"/><path d="M0 2l3.500 1.500 3-2M3.500 3.500V7.500" stroke="#3e3800" stroke-width=".6" fill="none"/><path d="M0 2l3-2 3.500 1.500-3 2z" fill="#fff15a"/><path d="M0 2l3.500 1.500V7.500L0 6z" fill="#f6e22a"/></g><g transform="translate(15.5,5.5) scale(0.85)"><path d="M0 2l3-2 3.500 1.500v3.700l-3 2.300L0 6z" fill="#e6cf0a" stroke="#3e3800" stroke-width=".7" stroke-linejoin="round"/><path d="M0 2l3.500 1.500 3-2M3.500 3.500V7.500" stroke="#3e3800" stroke-width=".6" fill="none"/><path d="M0 2l3-2 3.500 1.500-3 2z" fill="#fff15a"/><path d="M0 2l3.500 1.500V7.500L0 6z" fill="#f6e22a"/></g><g transform="translate(4.5,7.5) scale(0.85)"><path d="M0 2l3-2 3.500 1.500v3.700l-3 2.300L0 6z" fill="#e6cf0a" stroke="#3e3800" stroke-width=".7" stroke-linejoin="round"/><path d="M0 2l3.500 1.500 3-2M3.500 3.500V7.500" stroke="#3e3800" stroke-width=".6" fill="none"/><path d="M0 2l3-2 3.500 1.500-3 2z" fill="#fff15a"/><path d="M0 2l3.500 1.500V7.500L0 6z" fill="#f6e22a"/></g><g transform="translate(16,11) scale(0.85)"><path d="M0 2l3-2 3.500 1.500v3.700l-3 2.300L0 6z" fill="#e6cf0a" stroke="#3e3800" stroke-width=".7" stroke-linejoin="round"/><path d="M0 2l3.500 1.500 3-2M3.500 3.500V7.500" stroke="#3e3800" stroke-width=".6" fill="none"/><path d="M0 2l3-2 3.500 1.500-3 2z" fill="#fff15a"/><path d="M0 2l3.500 1.500V7.500L0 6z" fill="#f6e22a"/></g><g transform="translate(5,12) scale(0.85)"><path d="M0 2l3-2 3.500 1.500v3.700l-3 2.300L0 6z" fill="#274f8c" stroke="#0f2c57" stroke-width=".7" stroke-linejoin="round"/><path d="M0 2l3-2 3.500 1.500-3 2z" fill="#5b8ed6"/><path d="M0 2l3.500 1.500V7.500L0 6z" fill="#3566ac"/></g><g transform="translate(10.5,13.5) scale(0.9)"><path d="M0 2l3-2 3.500 1.500v3.700l-3 2.300L0 6z" fill="#e6cf0a" stroke="#3e3800" stroke-width=".7" stroke-linejoin="round"/><path d="M0 2l3.500 1.500 3-2M3.500 3.500V7.500" stroke="#3e3800" stroke-width=".6" fill="none"/><path d="M0 2l3-2 3.500 1.500-3 2z" fill="#fff15a"/><path d="M0 2l3.500 1.500V7.500L0 6z" fill="#f6e22a"/></g></svg>
<svg style="left:484px;top:125px" width="24" height="24" viewBox="0 0 24 24"><path d="M.8 12.900L18.200 2.300 23 3.700V22.600H.8z" fill="url(#gBlueL)" stroke="#0f2c57" stroke-width=".9" stroke-linejoin="round"/><path d="M.8 17.500L15 22.600H.8z" fill="#2f5c9e" stroke="#0f2c57" stroke-width=".9" stroke-linejoin="round"/><path d="M18.200 2.300V7" stroke="#0f2c57" stroke-width=".6" opacity=".6"/><g transform="translate(3,3) scale(0.8)"><path d="M0 2l3-2 3.500 1.500v3.700l-3 2.300L0 6z" fill="#e6cf0a" stroke="#3e3800" stroke-width=".7" stroke-linejoin="round"/><path d="M0 2l3.500 1.500 3-2M3.500 3.500V7.500" stroke="#3e3800" stroke-width=".6" fill="none"/><path d="M0 2l3-2 3.500 1.500-3 2z" fill="#fff15a"/><path d="M0 2l3.500 1.500V7.500L0 6z" fill="#f6e22a"/></g><g transform="translate(9,1) scale(1.8)"><path d="M0 2l3-2 3.500 1.500v3.700l-3 2.300L0 6z" fill="#e6cf0a" stroke="#3e3800" stroke-width=".7" stroke-linejoin="round"/><path d="M0 2l3.500 1.500 3-2M3.500 3.500V7.500" stroke="#3e3800" stroke-width=".6" fill="none"/><path d="M0 2l3-2 3.500 1.500-3 2z" fill="#fff15a"/><path d="M0 2l3.500 1.500V7.500L0 6z" fill="#f6e22a"/></g><g transform="translate(6,13) scale(0.95)"><path d="M0 2l3-2 3.500 1.500v3.700l-3 2.300L0 6z" fill="#274f8c" stroke="#0f2c57" stroke-width=".7" stroke-linejoin="round"/><path d="M0 2l3-2 3.500 1.500-3 2z" fill="#5b8ed6"/><path d="M0 2l3.500 1.500V7.500L0 6z" fill="#3566ac"/></g><g transform="translate(13.5,12) scale(1.25)"><path d="M0 2l3-2 3.500 1.500v3.700l-3 2.300L0 6z" fill="#e6cf0a" stroke="#3e3800" stroke-width=".7" stroke-linejoin="round"/><path d="M0 2l3.500 1.500 3-2M3.500 3.500V7.500" stroke="#3e3800" stroke-width=".6" fill="none"/><path d="M0 2l3-2 3.500 1.500-3 2z" fill="#fff15a"/><path d="M0 2l3.500 1.500V7.500L0 6z" fill="#f6e22a"/></g></svg>
<div class="vsep" style="left:514.3px;top:125px;height:24px"></div>
<svg style="left:521px;top:125px" width="24" height="24" viewBox="0 0 24 24"><path d="M2.500 12C3 6 7 3.500 12 3.500L22 7v11l-9.500 4L2.500 18z" fill="#3f70b6" stroke="#0f2c57" stroke-width=".9" stroke-linejoin="round"/><path d="M2.500 12C3 6 7 3.500 12 3.500L22 7c-5 0-9 3-9.500 8z" fill="url(#gRed)" stroke="#7a0000" stroke-width=".8" stroke-linejoin="round"/><path d="M2.500 12l10 3.500v6.500M12.500 15.500L22 11" stroke="#0f2c57" stroke-width=".8" fill="none"/><path d="M12.500 15C13 10 17 7 22 7v11l-9.500 4z" fill="#274f8c" stroke="#0f2c57" stroke-width=".9" stroke-linejoin="round"/></svg>
<svg style="left:552px;top:125px" width="24" height="24" viewBox="0 0 24 24"><path d="M2.500 13L11 3.500 22 7v11l-9.500 4L2.500 18z" fill="#3f70b6" stroke="#0f2c57" stroke-width=".9" stroke-linejoin="round"/><path d="M2.500 13L11 3.500 22 7l-9.500 9z" fill="url(#gRed)" stroke="#7a0000" stroke-width=".8" stroke-linejoin="round"/><path d="M12.500 16L22 7v11l-9.500 4z" fill="#274f8c" stroke="#0f2c57" stroke-width=".9" stroke-linejoin="round"/><path d="M2.500 13l10 3" stroke="#0f2c57" stroke-width=".8"/></svg>
<svg style="left:583px;top:125px" width="24" height="24" viewBox="0 0 24 24"><path d="M12 1.500L22 6v12l-10 4.500L2 18V6z" fill="#3f70b6" stroke="#0f2c57" stroke-width=".9" stroke-linejoin="round"/><path d="M2 6l10 4.500L22 6M12 10.500v12" stroke="#0f2c57" stroke-width=".9" fill="none"/><path d="M12 1.500L22 6l-10 4.500L2 6z" fill="#77a3dc" stroke="#0f2c57" stroke-width=".9" stroke-linejoin="round"/><path d="M5 8.500l6 2.700v9.500l-5-3z" fill="#e01a22" stroke="#7a0000" stroke-width=".8" stroke-linejoin="round"/><path d="M13 11.200l6-2.700-1 9-5 2.800z" fill="#e01a22" stroke="#7a0000" stroke-width=".8" stroke-linejoin="round"/><path d="M6 6l6-2 6 2-6 2.600z" fill="#d8141c" stroke="#7a0000" stroke-width=".8" stroke-linejoin="round"/></svg>
<svg style="left:614px;top:125px" width="24" height="24" viewBox="0 0 24 24"><path d="M4 3.500L14 1.500 22 4v15l-9 3.500L2 19.500z" fill="#3f70b6" stroke="#0f2c57" stroke-width=".9" stroke-linejoin="round"/><path d="M13 22.500V9" stroke="#0f2c57" stroke-width=".8"/><path d="M6 5.500l8-1.500 6 2v11.500l-7 2.500-8-2z" fill="#e01a22" stroke="#7a0000" stroke-width=".8" stroke-linejoin="round"/><path d="M14 4v10l6 3.500M14 14l-9 4" stroke="#7a0000" stroke-width=".8" fill="none"/><path d="M14 14l6 3.500-7 2.500-8-2z" fill="#f44"/><path d="M14 4v10l-9 4 1-12.500z" fill="#c8141c"/></svg>
<div class="vsep" style="left:644.5px;top:125px;height:24px"></div>
<svg style="left:651px;top:125px" width="24" height="24" viewBox="0 0 24 24"><circle cx="15.500" cy="8.500" r="7.200" fill="url(#gBall)" stroke="#0f2c57" stroke-width=".8"/><circle cx="8.500" cy="15" r="7.400" fill="url(#gBall)" stroke="#0f2c57" stroke-width=".8"/></svg>
<div class="abs" style="left:680px;top:121px;width:2px;height:31px;border-left:1px solid #a8a8a8;border-right:1px solid #fff"></div>
<div class="grip" style="left:685px;top:123px;height:28px"></div>
<svg style="left:694.5px;top:125.5px" width="23" height="23" viewBox="0 0 24 24"><path d="M3 8l6-5.500 4.500 1.800V11l4.500-3.500 3.500 2V17l-8 5.500L3 18z" fill="#3f70b6" stroke="#0f2c57" stroke-width=".9" stroke-linejoin="round"/><path d="M3 8l5.500 2.500 5-6.200M8.500 10.500V15l5 2.500 8-5.500M13.500 17.500v5" stroke="#0f2c57" stroke-width=".9" fill="none"/><path d="M3 8l6-5.500 4.500 1.800-5 6.200z" fill="#77a3dc" stroke="#0f2c57" stroke-width=".9" stroke-linejoin="round"/><path d="M8.500 15l5-4 4.500-3.500 3.500 2-8 8z" fill="#77a3dc" stroke="#0f2c57" stroke-width=".9" stroke-linejoin="round"/><path d="M13.500 17.500l8-8V17l-8 5.500z" fill="#274f8c" stroke="#0f2c57" stroke-width=".9" stroke-linejoin="round"/></svg>
<svg style="left:725.5px;top:125.5px" width="23" height="23" viewBox="0 0 24 24"><path d="M2 2.500h19v15l-4.500 4.500H2z" fill="#fbfbfb" stroke="#999" stroke-width=".9"/><path d="M21 17.500h-4.500V22z" fill="#ddd" stroke="#999" stroke-width=".6"/><path d="M4.500 11h9.500v8.500H4.500z" fill="none" stroke="#d4141c" stroke-width="1.800"/><circle cx="15" cy="9" r="4.800" fill="none" stroke="#d4141c" stroke-width="1.800"/></svg>
<svg style="left:756.5px;top:125.5px" width="23" height="23" viewBox="0 0 24 24"><path d="M9 2h6v7h4.500L12 16 4.500 9H9z" fill="#bdbdbd" stroke="#a2a2a2" stroke-width=".8"/><path d="M2.500 13.500h4v6.500h11v-6.500h4v9.500h-19z" fill="#f2f2f2" stroke="#adadad" stroke-width="1"/></svg>
<svg style="left:787.5px;top:125.5px" width="23" height="23" viewBox="0 0 24 24"><path d="M2 4.500l9-2.500v18l-9 2.500z" fill="#f4f4f4" stroke="#999" stroke-width=".8"/><path d="M4 11.500h4.500v5H4z" fill="none" stroke="#d4141c" stroke-width="1.300"/><circle cx="8" cy="10" r="2.600" fill="none" stroke="#d4141c" stroke-width="1.300"/><path d="M11 4l6-2.500L23 4v15.500L17 23l-6-3z" fill="#3f70b6" stroke="#0f2c57" stroke-width=".9" stroke-linejoin="round"/><path d="M11 4l6 2.500L23 4M17 6.500V23" stroke="#0f2c57" stroke-width=".8" fill="none"/><path d="M11 4l6-2.500L23 4l-6 2.500z" fill="#77a3dc"/><path d="M17 6.500L23 4v15.500L17 23z" fill="#274f8c"/></svg>
<div class="vsep" style="left:817.5px;top:125px;height:24px"></div>
<svg style="left:824.5px;top:125.5px" width="23" height="23" viewBox="0 0 24 24"><circle cx="12" cy="12" r="3.200" fill="#3f70b6" stroke="#274f8c" stroke-width=".7"/><circle cx="12" cy="12" r="1.800" fill="#e01a22"/></svg>
<svg style="left:855.5px;top:125.5px" width="23" height="23" viewBox="0 0 24 24"><path d="M2.500 21.500L21.500 2.500" stroke="#0f2c57" stroke-width="3"/><path d="M2.500 21.500L21.500 2.500" stroke="#4a7cc4" stroke-width="1.700"/><circle cx="2.800" cy="21.200" r="1.900" fill="#e01a22" stroke="#7a0000" stroke-width=".5"/><circle cx="21.200" cy="2.800" r="1.900" fill="#e01a22" stroke="#7a0000" stroke-width=".5"/></svg>
<svg style="left:886.5px;top:125.5px" width="23" height="23" viewBox="0 0 24 24"><path d="M12 2.500l9.500 7-8 12L2.500 13z" fill="none" stroke="#0f2c57" stroke-width="3" stroke-linejoin="round"/><path d="M12 2.500l9.500 7-8 12L2.500 13z" fill="none" stroke="#4a7cc4" stroke-width="1.600" stroke-linejoin="round"/><circle cx="12" cy="2.5" r="1.800" fill="#e01a22" stroke="#7a0000" stroke-width=".5"/><circle cx="21.5" cy="9.5" r="1.800" fill="#e01a22" stroke="#7a0000" stroke-width=".5"/><circle cx="13.5" cy="21.5" r="1.800" fill="#e01a22" stroke="#7a0000" stroke-width=".5"/><circle cx="2.5" cy="13" r="1.800" fill="#e01a22" stroke="#7a0000" stroke-width=".5"/></svg>
<svg style="left:917.5px;top:125.5px" width="23" height="23" viewBox="0 0 24 24"><path d="M3 4c4-3 8 1 12-1.500 3-1.500 7-1 7 1.500 0 4-3 6-2 10 1 4 1.500 8-2.500 8-4 0-5-3-9-2.500-4 .5-7-1-6.500-5C2.500 10 0 7 3 4z" fill="url(#gBall)" stroke="#274f8c" stroke-width=".8"/><circle cx="21.5" cy="3.5" r="1.700" fill="#e01a22" stroke="#7a0000" stroke-width=".5"/><circle cx="2.5" cy="11" r="1.700" fill="#e01a22" stroke="#7a0000" stroke-width=".5"/><circle cx="18.5" cy="21.5" r="1.700" fill="#e01a22" stroke="#7a0000" stroke-width=".5"/></svg>
<svg style="left:948.5px;top:125.5px" width="23" height="23" viewBox="0 0 24 24"><path d="M7 4.500C9 1 15 1 17 4.500c3 .5 5.500 3 6 6.500-1 1.500-3 1.500-4.500 0 0 3-.5 6-2 8.500-1 2.500-2.500 3.500-4.500 3.500s-3.500-1-4.500-3.500C6 17 5.500 14 5.500 11 4 12.500 2 12.500 1 11c.5-3.500 3-6 6-6.500z" fill="#f08a1c" stroke="#8a4a04" stroke-width=".8"/><path d="M9 17c1 3 5 3 6 0l-1 4.500c-1 1.500-3 1.500-4 0z" fill="#c8640a"/><ellipse cx="12.500" cy="10" rx="3" ry="1.800" fill="#fff"/><circle cx="12.500" cy="10" r="1.300" fill="#111"/><path d="M10.500 19.500h3" stroke="#3a1a00" stroke-width=".8"/></svg>
<div class="docktitle" style="left:1px;top:155px;width:268px"></div>
<div class="t" style="left:2.7px;top:157.5px;transform:scaleX(0.8450);">Combo View</div>
<svg style="left:239px;top:160px" width="26" height="10" viewBox="0 0 26 10"><path d="M2.500 0.750h5.500v4.500M0.750 3.250h5.500v5.500h-5.500z" fill="none" stroke="#000" stroke-width="1.500"/><path d="M17 1.500l7 7M24 1.500l-7 7" stroke="#000" stroke-width="1.700" fill="none"/></svg>
<div class="abs" style="left:54px;top:178px;width:47px;height:19px;background:#f0f0f0;border:1px solid #d9d9d9;border-left:0"></div>
<div class="abs" style="left:1px;top:176px;width:54px;height:22px;background:#fff;border:1px solid #d9d9d9;border-bottom:0;border-left:0"></div>
<div class="t" style="left:12.3px;top:179.6px;transform:scaleX(0.8567);">Model</div>
<div class="t" style="left:65.1px;top:180.2px;transform:scaleX(0.8248);">Tasks</div>
<div class="abs" style="left:1px;top:197px;width:266px;height:553px;background:#fff"></div>
<div class="abs" style="left:1px;top:457px;width:266px;height:5px;background:#f0f0f0"></div>
<div class="abs" style="left:3px;top:198px;width:262px;height:259px;border:1px solid #828790;background:#fff"></div>
<div class="t" style="left:8.4px;top:203.7px;transform:scaleX(1.0054);">Labels &amp; Attributes</div>
<div class="abs" style="left:45px;top:276px;width:202px;height:18px;background:#e5f3ff"></div>
<div class="abs" style="left:45px;top:366px;width:202px;height:19px;background:#cce8ff;border:1px dotted #333;border-right:0"></div>
<div class="abs" style="left:4px;top:199px;width:243px;height:238px;overflow:hidden">
<div class="t" style="left:65.3px;top:25.2px;color:#929292;transform:scaleX(0.9009);">USB_2_0_type_A_Dual_Stacked_jack</div>
<div class="t" style="left:65.3px;top:43.3px;transform:scaleX(0.9493);">Distance: 0.399469 mm</div>
<div class="t" style="left:65.3px;top:61.3px;transform:scaleX(0.9493);">Distance: 0.399918 mm</div>
<div class="t" style="left:65.3px;top:79.3px;color:#929292;transform:scaleX(0.9594);">Board shield</div>
<div class="t" style="left:65.3px;top:97.3px;color:#929292;transform:scaleX(0.9305);">PCB Pocket</div>
<div class="t" style="left:85.4px;top:115.3px;color:#929292;transform:scaleX(0.9578);">PCB pocket sketch</div>
<div class="t" style="left:65.3px;top:133.3px;color:#929292;transform:scaleX(0.9223);">Passives Pocket</div>
<div class="t" style="left:85.4px;top:151.3px;color:#929292;transform:scaleX(0.9285);">Passives Pocket Sketch</div>
<div class="t" style="left:65.3px;top:169.3px;transform:scaleX(0.9740);">MCU Pocket</div>
<div class="t" style="left:85.4px;top:187.3px;color:#929292;transform:scaleX(0.9621);">MCU Pocket Sketch</div>
<div class="t" style="left:65.3px;top:205.3px;color:#929292;transform:scaleX(0.9435);">Edge Pocket</div>
<div class="t" style="left:65.3px;top:223.3px;color:#929292;transform:scaleX(1.0196);">Mounting Peg</div>
</div>
<svg style="left:30px;top:280px" width="8" height="10" viewBox="0 0 8 10"><path d="M1.500 1l4 4-4 4" fill="none" stroke="#a0a0a0" stroke-width="1.200"/></svg>
<svg style="left:30px;top:406px" width="8" height="10" viewBox="0 0 8 10"><path d="M1.500 1l4 4-4 4" fill="none" stroke="#a0a0a0" stroke-width="1.200"/></svg>
<svg style="left:30px;top:424px" width="8" height="10" viewBox="0 0 8 10"><path d="M1.500 1l4 4-4 4" fill="none" stroke="#a0a0a0" stroke-width="1.200"/></svg>
<svg style="left:29px;top:299px" width="10" height="8" viewBox="0 0 10 8"><path d="M1 1.500l4 4 4-4" fill="none" stroke="#262626" stroke-width="1.300"/></svg>
<svg style="left:29px;top:335px" width="10" height="8" viewBox="0 0 10 8"><path d="M1 1.500l4 4 4-4" fill="none" stroke="#262626" stroke-width="1.300"/></svg>
<svg style="left:29px;top:371px" width="10" height="8" viewBox="0 0 10 8"><path d="M1 1.500l4 4 4-4" fill="none" stroke="#262626" stroke-width="1.300"/></svg>
<svg style="left:47px;top:223px;" width="16" height="16" viewBox="0 0 24 24"><path d="M2 5.500L14 2l8 3v13l-8 4-12-3z" fill="#9c9c9c"/><path d="M2 5.500L14 2l8 3-8 3.500z" fill="#c2c2c2"/><path d="M14 8.500l8-3.500v13l-8 4z" fill="#8a8a8a"/><path d="M2 5.500l12 3V22L2 19z" fill="#a6a6a6"/></svg>
<svg style="left:47px;top:241px;" width="16" height="16" viewBox="0 0 24 24"><path d="M6.500 1L1.500 6l15 16.500c3 1 5-1.500 4.500-4z" fill="#2fd0d8" stroke="#0a7f87" stroke-width="1.200" stroke-linejoin="round"/><path d="M16.500 22.500c.5-2.500 2-4 4.500-4" stroke="#0a7f87" stroke-width="1" fill="none"/><path d="M9 4l-2 2M11.500 7L10 8.500M14 9.800l-2 2M16.500 12.500L15 14M19 15.300l-2 2" stroke="#0a5a60" stroke-width="1"/></svg>
<svg style="left:47px;top:259px;" width="16" height="16" viewBox="0 0 24 24"><path d="M6.500 1L1.500 6l15 16.500c3 1 5-1.500 4.500-4z" fill="#2fd0d8" stroke="#0a7f87" stroke-width="1.200" stroke-linejoin="round"/><path d="M16.500 22.500c.5-2.500 2-4 4.500-4" stroke="#0a7f87" stroke-width="1" fill="none"/><path d="M9 4l-2 2M11.500 7L10 8.500M14 9.800l-2 2M16.500 12.500L15 14M19 15.300l-2 2" stroke="#0a5a60" stroke-width="1"/></svg>
<svg style="left:47px;top:277px;filter:grayscale(1) brightness(.72) contrast(.8);opacity:.85;" width="16" height="16" viewBox="0 0 24 24"><path d="M1.200 17.700L11.500 13.500 22.600 16.700 12 22.200z" fill="none" stroke="#3c4042" stroke-width="2.300" stroke-linejoin="round"/><path d="M1.200 17.700L11.500 13.500 22.600 16.700 12 22.200z" fill="none" stroke="#ececec" stroke-width=".9"/><path d="M1.500 7.700L12 2.200l10.600 3.900L12.600 11.600z" fill="#fff25e" stroke="#3e3800" stroke-width=".9" stroke-linejoin="round"/><path d="M1.500 7.700l11.100 3.900v5.100L1.500 12.200z" fill="#f2de14" stroke="#3e3800" stroke-width=".9" stroke-linejoin="round"/><path d="M12.600 11.600l10-5.500v5L12.600 16.700z" fill="#c9ae00" stroke="#3e3800" stroke-width=".9" stroke-linejoin="round"/></svg>
<svg style="left:47px;top:295px;filter:grayscale(1) brightness(1.15) contrast(.75);opacity:.85;" width="16" height="16" viewBox="0 0 24 24"><path d="M2 10.500L13.500 3.500 22.500 8 11 16z" fill="#77a3dc" stroke="#0f2c57" stroke-width=".9" stroke-linejoin="round"/><path d="M2 10.500l9 5.500v6l-9-5.500z" fill="#3f70b6" stroke="#0f2c57" stroke-width=".9" stroke-linejoin="round"/><path d="M11 16l11.500-8v6L11 22z" fill="#274f8c" stroke="#0f2c57" stroke-width=".9" stroke-linejoin="round"/><path d="M7 10.500l6.500-4 5 2.500-6.500 4.300z" fill="#e01a22" stroke="#7a0000" stroke-width=".7"/><path d="M9.500 10.600l4-2.500 2.500 1.300-2 1.400z" fill="#8a0008"/></svg>
<svg style="left:67px;top:313px;" width="16" height="16" viewBox="0 0 24 24"><path d="M3.500 9.500h11v11.500h-11z" fill="#fff" stroke="#7c7c7c" stroke-width="1.600"/><circle cx="14.500" cy="8.500" r="6" fill="none" stroke="#7c7c7c" stroke-width="1.600"/><path d="M3.500 9.500h11v11.500h-11z" fill="none" stroke="#7c7c7c" stroke-width="1.600"/></svg>
<svg style="left:47px;top:331px;filter:grayscale(1) brightness(1.15) contrast(.75);opacity:.85;" width="16" height="16" viewBox="0 0 24 24"><path d="M2 10.500L13.500 3.500 22.500 8 11 16z" fill="#77a3dc" stroke="#0f2c57" stroke-width=".9" stroke-linejoin="round"/><path d="M2 10.500l9 5.500v6l-9-5.500z" fill="#3f70b6" stroke="#0f2c57" stroke-width=".9" stroke-linejoin="round"/><path d="M11 16l11.500-8v6L11 22z" fill="#274f8c" stroke="#0f2c57" stroke-width=".9" stroke-linejoin="round"/><path d="M7 10.500l6.500-4 5 2.500-6.500 4.300z" fill="#e01a22" stroke="#7a0000" stroke-width=".7"/><path d="M9.500 10.600l4-2.500 2.500 1.300-2 1.400z" fill="#8a0008"/></svg>
<svg style="left:67px;top:349px;" width="16" height="16" viewBox="0 0 24 24"><path d="M3.500 9.500h11v11.500h-11z" fill="#fff" stroke="#7c7c7c" stroke-width="1.600"/><circle cx="14.500" cy="8.500" r="6" fill="none" stroke="#7c7c7c" stroke-width="1.600"/><path d="M3.500 9.500h11v11.500h-11z" fill="none" stroke="#7c7c7c" stroke-width="1.600"/></svg>
<svg style="left:47px;top:367px;" width="16" height="16" viewBox="0 0 24 24"><path d="M2 10.500L13.500 3.500 22.500 8 11 16z" fill="#77a3dc" stroke="#0f2c57" stroke-width=".9" stroke-linejoin="round"/><path d="M2 10.500l9 5.500v6l-9-5.500z" fill="#3f70b6" stroke="#0f2c57" stroke-width=".9" stroke-linejoin="round"/><path d="M11 16l11.500-8v6L11 22z" fill="#274f8c" stroke="#0f2c57" stroke-width=".9" stroke-linejoin="round"/><path d="M7 10.500l6.500-4 5 2.500-6.500 4.300z" fill="#e01a22" stroke="#7a0000" stroke-width=".7"/><path d="M9.500 10.600l4-2.500 2.500 1.300-2 1.400z" fill="#8a0008"/></svg>
<svg style="left:67px;top:385px;" width="16" height="16" viewBox="0 0 24 24"><path d="M3.500 9.500h11v11.500h-11z" fill="#fff" stroke="#7c7c7c" stroke-width="1.600"/><circle cx="14.500" cy="8.500" r="6" fill="none" stroke="#7c7c7c" stroke-width="1.600"/><path d="M3.500 9.500h11v11.500h-11z" fill="none" stroke="#7c7c7c" stroke-width="1.600"/></svg>
<svg style="left:47px;top:403px;filter:grayscale(1) brightness(1.15) contrast(.75);opacity:.85;" width="16" height="16" viewBox="0 0 24 24"><path d="M2 10.500L13.500 3.500 22.500 8 11 16z" fill="#77a3dc" stroke="#0f2c57" stroke-width=".9" stroke-linejoin="round"/><path d="M2 10.500l9 5.500v6l-9-5.500z" fill="#3f70b6" stroke="#0f2c57" stroke-width=".9" stroke-linejoin="round"/><path d="M11 16l11.500-8v6L11 22z" fill="#274f8c" stroke="#0f2c57" stroke-width=".9" stroke-linejoin="round"/><path d="M7 10.500l6.500-4 5 2.500-6.500 4.300z" fill="#e01a22" stroke="#7a0000" stroke-width=".7"/><path d="M9.500 10.600l4-2.500 2.500 1.300-2 1.400z" fill="#8a0008"/></svg>
<svg style="left:47px;top:421px;filter:grayscale(1) brightness(.72) contrast(.8);opacity:.85;" width="16" height="16" viewBox="0 0 24 24"><path d="M1.200 17.700L11.500 13.500 22.600 16.700 12 22.200z" fill="none" stroke="#3c4042" stroke-width="2.300" stroke-linejoin="round"/><path d="M1.200 17.700L11.500 13.500 22.600 16.700 12 22.200z" fill="none" stroke="#ececec" stroke-width=".9"/><path d="M1.500 7.700L12 2.200l10.600 3.900L12.600 11.600z" fill="#fff25e" stroke="#3e3800" stroke-width=".9" stroke-linejoin="round"/><path d="M1.500 7.700l11.100 3.900v5.100L1.500 12.200z" fill="#f2de14" stroke="#3e3800" stroke-width=".9" stroke-linejoin="round"/><path d="M12.600 11.600l10-5.500v5L12.600 16.700z" fill="#c9ae00" stroke="#3e3800" stroke-width=".9" stroke-linejoin="round"/></svg>
<div class="abs" style="left:248px;top:199px;width:16px;height:238px;background:#f0f0f0"></div>
<div class="abs" style="left:248px;top:260px;width:15px;height:86px;background:#cdcdcd"></div>
<svg style="left:250.5px;top:203px" width="10" height="8" viewBox="0 0 10 8"><path d="M1 6l4-4 4 4" fill="none" stroke="#606060" stroke-width="1.500"/></svg>
<svg style="left:250.5px;top:425px" width="10" height="8" viewBox="0 0 10 8"><path d="M1 2l4 4 4-4" fill="none" stroke="#606060" stroke-width="1.500"/></svg>
<div class="abs" style="left:4px;top:437px;width:260px;height:19px;background:#f0f0f0"></div>
<div class="abs" style="left:21px;top:438px;width:181px;height:17px;background:#cdcdcd"></div>
<svg style="left:8px;top:441px" width="8" height="10" viewBox="0 0 8 10"><path d="M6 1L2 5l4 4" fill="none" stroke="#606060" stroke-width="1.500"/></svg>
<svg style="left:234px;top:441px" width="8" height="10" viewBox="0 0 8 10"><path d="M2 1l4 4-4 4" fill="none" stroke="#606060" stroke-width="1.500"/></svg>
<div class="abs" style="left:5px;top:463px;width:256px;height:268px;border:1px solid #828790;background:#fff"></div>
<div class="t" style="left:10.3px;top:468.4px;transform:scaleX(0.9746);">Property</div>
<div class="t" style="left:109.6px;top:468.4px;transform:scaleX(1.0235);">Value</div>
<div class="abs" style="left:105px;top:464px;width:1px;height:23px;background:#e0e0e0"></div>
<div class="abs" style="left:6px;top:487px;width:254px;height:20px;background:#a0a0a0"></div>
<div class="t" style="left:29.2px;top:490.4px;color:#fff;font-weight:bold;transform:scaleX(0.8855);">Base</div>
<div class="abs" style="left:6px;top:507px;width:254px;height:20px;background:#f6f6f6"></div>
<div class="abs" style="left:26px;top:526px;width:234px;height:1px;background:#dcdcdc"></div>
<div class="abs" style="left:105px;top:507px;width:1px;height:20px;background:#dcdcdc"></div>
<div class="t" style="left:29.2px;top:510.3px;transform:scaleX(0.9299);">Label</div>
<div class="t" style="left:109.2px;top:510.3px;transform:scaleX(0.9800);">MCU Pocket</div>
<div class="abs" style="left:6px;top:527px;width:254px;height:20px;background:#a0a0a0"></div>
<div class="t" style="left:29.2px;top:530.4px;color:#fff;font-weight:bold;transform:scaleX(0.9492);">Part Design</div>
<div class="abs" style="left:6px;top:547px;width:254px;height:20px;background:#f6f6f6"></div>
<div class="abs" style="left:26px;top:566px;width:234px;height:1px;background:#dcdcdc"></div>
<div class="abs" style="left:105px;top:547px;width:1px;height:20px;background:#dcdcdc"></div>
<div class="t" style="left:29.2px;top:550.3px;transform:scaleX(0.9370);">Refine</div>
<div class="t" style="left:109.2px;top:550.3px;transform:scaleX(0.9548);">false</div>
<div class="abs" style="left:6px;top:567px;width:254px;height:20px;background:#a0a0a0"></div>
<div class="t" style="left:29.2px;top:570.4px;color:#fff;font-weight:bold;transform:scaleX(0.9733);">Pocket</div>
<div class="abs" style="left:6px;top:587px;width:254px;height:20px;background:#f6f6f6"></div>
<div class="abs" style="left:26px;top:606px;width:234px;height:1px;background:#dcdcdc"></div>
<div class="abs" style="left:105px;top:587px;width:1px;height:20px;background:#dcdcdc"></div>
<div class="t" style="left:29.2px;top:590.3px;transform:scaleX(0.9341);">Type</div>
<div class="t" style="left:109.2px;top:590.3px;transform:scaleX(1.0081);">Length</div>
<div class="abs" style="left:6px;top:607px;width:254px;height:20px;background:#fff"></div>
<div class="abs" style="left:26px;top:607px;width:79px;height:19px;background:#efefef"></div>
<div class="abs" style="left:26px;top:626px;width:234px;height:1px;background:#dcdcdc"></div>
<div class="abs" style="left:105px;top:607px;width:1px;height:20px;background:#dcdcdc"></div>
<div class="t" style="left:29.2px;top:610.3px;transform:scaleX(0.9891);">Length</div>
<div class="t" style="left:109.2px;top:610.3px;transform:scaleX(0.9854);">1.00 mm</div>
<div class="abs" style="left:6px;top:627px;width:254px;height:20px;background:#f6f6f6"></div>
<div class="abs" style="left:26px;top:646px;width:234px;height:1px;background:#dcdcdc"></div>
<div class="abs" style="left:105px;top:627px;width:1px;height:20px;background:#dcdcdc"></div>
<div class="t" style="left:29.2px;top:630.3px;transform:scaleX(0.9914);">Length2</div>
<div class="t" style="left:109.2px;top:630.3px;transform:scaleX(0.9662);">100.00 mm</div>
<div class="abs" style="left:6px;top:647px;width:254px;height:20px;background:#fff"></div>
<div class="abs" style="left:26px;top:666px;width:234px;height:1px;background:#dcdcdc"></div>
<div class="abs" style="left:105px;top:647px;width:1px;height:20px;background:#dcdcdc"></div>
<div class="t" style="left:29.2px;top:650.3px;transform:scaleX(0.9845);">Offset</div>
<div class="t" style="left:109.2px;top:650.3px;transform:scaleX(0.9854);">0.00 mm</div>
<div class="abs" style="left:6px;top:667px;width:254px;height:20px;background:#a0a0a0"></div>
<div class="t" style="left:29.2px;top:670.4px;color:#fff;font-weight:bold;transform:scaleX(0.9530);">Sketch Based</div>
<div class="abs" style="left:6px;top:687px;width:254px;height:20px;background:#fff"></div>
<div class="abs" style="left:26px;top:706px;width:234px;height:1px;background:#dcdcdc"></div>
<div class="abs" style="left:105px;top:687px;width:1px;height:20px;background:#dcdcdc"></div>
<div class="t" style="left:29.2px;top:690.3px;transform:scaleX(1.0268);">Midplane</div>
<div class="t" style="left:109.2px;top:690.3px;transform:scaleX(0.9548);">false</div>
<div class="abs" style="left:6px;top:707px;width:254px;height:20px;background:#f6f6f6"></div>
<div class="abs" style="left:26px;top:726px;width:234px;height:1px;background:#dcdcdc"></div>
<div class="abs" style="left:105px;top:707px;width:1px;height:20px;background:#dcdcdc"></div>
<div class="t" style="left:29.2px;top:710.3px;transform:scaleX(0.9035);">Reversed</div>
<div class="t" style="left:109.2px;top:710.3px;transform:scaleX(0.9548);">false</div>
<svg style="left:0;top:730px" width="110" height="22" viewBox="0 730 110 22"><path d="M3.500 734.500C7 736 6.500 747 12 747H37C43.500 747 43.500 737 48 733.500" fill="#fff" stroke="#333" stroke-width="1"/><path d="M48 733.500C53 736 51.500 748.500 58 748.500H86C92.500 748.500 92 737 95.500 733" fill="#fff" stroke="#333" stroke-width="1"/></svg>
<div class="t" style="left:14.6px;top:732.4px;transform:scaleX(0.8297);">View</div>
<div class="t" style="left:60.2px;top:733.4px;transform:scaleX(0.9074);">Data</div>
<div class="abs" id="v3d" style="left:273px;top:154px;width:1107px;height:575px;background:linear-gradient(180deg,#333366 0%,#9797aa 100%);overflow:hidden">
<svg style="left:0;top:0" width="1107" height="575" viewBox="273 154 1107 575">
<defs><clipPath id="vclip"><rect x="273" y="154" width="1107" height="575"/></clipPath></defs>
<g clip-path="url(#vclip)">
<polygon points="477.0,476.3 477.0,407.0 509.9,388.0 533.9,401.9 807.8,243.7 807.8,216.0 840.7,197.0 1198.4,403.5 1198.4,472.8 834.7,682.8" fill="#808080"/>
<path d="M477.0,476.3 L477.0,407.0 M477.0,407.0 L834.7,613.5 M477.0,476.3 L834.7,682.8 M834.7,682.8 L834.7,613.5 M477.0,407.0 L509.9,388.0 M509.9,388.0 L867.6,594.5 M834.7,613.5 L867.6,594.5 M867.6,594.5 L867.6,622.2 M867.6,622.2 L1165.5,450.2 M1165.5,450.2 L1165.5,422.5 M1165.5,422.5 L1198.4,403.5 M1198.4,403.5 L1198.4,472.8 M834.7,682.8 L1198.4,472.8 M1198.4,403.5 L840.7,197.0 M840.7,197.0 L807.8,216.0 M807.8,216.0 L807.8,243.7 M807.8,216.0 L1165.5,422.5 M807.8,243.7 L1165.5,450.2 M807.8,243.7 L533.9,401.9 M575.6,409.2 L799.0,280.2 M799.0,280.2 L888.4,331.8 M888.4,331.8 L868.3,343.4 M868.3,343.4 L1037.8,441.3 M1037.8,441.3 L859.3,544.4 M859.3,544.4 L689.7,446.5 M689.7,446.5 L664.9,460.8 M664.9,460.8 L575.6,409.2 M799.0,280.2 L799.0,300.5 M799.0,300.5 L593.1,419.3 M799.0,300.5 L870.8,341.9 M868.3,343.4 L868.3,363.7 M868.3,363.7 L858.7,358.2 M858.7,358.2 L858.7,371.8 M858.7,358.2 L697.7,451.1 M858.7,371.8 L709.5,457.9 M858.7,371.8 L1008.5,458.3" fill="none" stroke="#0a0a0a" stroke-width="1.5" stroke-linecap="round"/>

<!-- datum planes / axes -->
<g stroke="#2f93ff" stroke-width="2" fill="none">
<path d="M555 154V729M1151 154V729"/>
<path d="M257 413.5L853 69.5L1449 413.5L853 757.5Z"/>
<path d="M555 241.5L1151 585.5M555 585.5L1151 241.5"/>
<path d="M555 585.5L853 757.5M1151 585.5L853 757.5"/>
<path d="M853 154V477M853 673V729"/>
<path d="M853 482V672" stroke-dasharray="3.4 12.63" stroke-width="2.6"/>
</g>
<!-- datum labels -->
<g font-family="'Liberation Serif',serif" font-style="italic" fill="#2268b6" fill-opacity="0.88" stroke="#2268b6" stroke-opacity="0.5" stroke-width="0.5">
<text transform="matrix(0.866,-0.5,0,1,564,273)" font-size="34" x="0" y="0"><tspan letter-spacing="4">YZ_</tspan>Plane</text>
<text transform="matrix(0.866,0.5,-0.866,0.5,577,244)" font-size="33" x="0" y="0" letter-spacing="3">X_Axis</text>
<text transform="translate(568,567) rotate(-30)" font-size="36" x="0" y="0" letter-spacing="1">Y_Axis</text>
<text transform="matrix(0.866,0.5,0,1,971,168)" font-size="34" x="0" y="0" text-anchor="end">XY_Plane</text>
</g>
<text transform="matrix(0,-1,-0.866,-0.5,862,754)" font-family="'Liberation Serif',serif" font-style="italic" font-size="35" fill="#0c0c0c" x="0" y="0" letter-spacing="1.5">Z_Axis</text>
<!-- measurement -->
<g stroke="#fff" fill="none">
<path d="M477.4 331.4V318.6L486.5 313.4H488.5V324.4" stroke-width="2.2" stroke-linejoin="round"/>
<path d="M484 320L493 329M493 320L484 329M473 327L482 336M482 327L473 336" stroke-width="1"/>
</g>
<text x="483" y="315" font-family="'Liberation Serif',serif" font-size="18" fill="#fff" stroke="#fff" stroke-width="0.3">0.40 mm</text>
<!-- axis cross -->
<g stroke-width="1.8" fill="none">
<path d="M1351.4 699V681" stroke="#1c1c96"/><path d="M1351.4 679l-2.2 7h4.4z" fill="#1c1c96" stroke="none"/>
<path d="M1351.4 699L1363 692.5" stroke="#1f8c1f"/><path d="M1364.5 691.6l-6.2 1 2 3.4z" fill="#1f8c1f" stroke="none"/>
<path d="M1351.4 699L1368 708.8" stroke="#8c1c1c"/><path d="M1368.6 709.2l-6.8-1.2 2.2-3.6z" fill="#8c1c1c" stroke="none"/>
</g>
<g font-family="'Liberation Sans',sans-serif" font-size="10" fill="#000">
<text x="1353" y="681">Z</text><text x="1365.5" y="693">Y</text><text x="1370.5" y="710">X</text>
</g>
<!-- nav cube -->
<defs><filter id="ncblur" x="-10%" y="-10%" width="120%" height="120%"><feGaussianBlur stdDeviation="0.7"/></filter>
<filter id="ntblur" x="-10%" y="-10%" width="120%" height="120%"><feGaussianBlur stdDeviation="0.35"/></filter>
<clipPath id="ncclip"><path d="M1297 194.500Q1300 194.500 1304 196.500L1336 212.500Q1341.500 215.500 1341 222L1338 252Q1337.500 257.500 1332 261L1304 281.500Q1298 285.500 1292 282L1263 263.500Q1258.500 260.500 1258 255L1253 222Q1252.500 215.500 1258 212.500L1290 196.500Q1294 194.500 1297 194.500Z"/></clipPath></defs>
<g fill="#e4e8f1" fill-opacity="0.96">
<path d="M1297 162.500L1306 171H1288Z"/><path d="M1297 312L1306 303.300H1288Z"/>
<path d="M1222 237L1230.800 228.200V246Z"/><path d="M1372.200 237L1363.200 228.200V246Z"/>
<path d="M1243 194.700L1242.400 185L1253.200 193.800Z"/><path d="M1351 194.700L1351.600 185L1340.800 193.800Z"/>
</g>
<g fill="none" stroke="#e4e8f1" stroke-opacity="0.96" stroke-width="5">
<path d="M1275.900 172Q1258 177.500 1247.500 190"/><path d="M1318.100 172Q1336 177.500 1346.500 190"/>
</g>
<g filter="url(#ncblur)">
<path d="M1297 194.500Q1300 194.500 1304 196.500L1336 212.500Q1341.500 215.500 1341 222L1338 252Q1337.500 257.500 1332 261L1304 281.500Q1298 285.500 1292 282L1263 263.500Q1258.500 260.500 1258 255L1253 222Q1252.500 215.500 1258 212.500L1290 196.500Q1294 194.500 1297 194.500Z" fill="#f7f8fb" fill-opacity="0.97"/>
<g clip-path="url(#ncclip)" stroke="#dde2ec" stroke-width="11" stroke-linecap="butt" fill="none">
<path d="M1297 236L1298 290"/><path d="M1297 236L1248 213"/><path d="M1297 236L1346 213"/>
</g>
<path d="M1297 194.500L1341 218L1337 257L1298 284.500L1259 259L1253 218Z" fill="none" stroke="#e6e9f1" stroke-width="3" clip-path="url(#ncclip)"/>
<circle cx="1297" cy="236" r="10" fill="#eef0f6"/><circle cx="1297" cy="236" r="6" fill="#f8f9fc"/>
</g>
<path d="M1297 231V205M1302 241L1325 253" stroke="#c6c2d6" stroke-width="1.200" fill="none"/>
<path d="M1291 241L1268 254" stroke="#b8f0b0" stroke-width="1" fill="none"/>
<path d="M1258.800 258.300L1248.800 210" stroke="#0a0aee" stroke-width="1.400"/>
<path d="M1258.800 258.300L1297 293" stroke="#e0102a" stroke-width="1.400"/>
<path d="M1258.800 258.300L1261.500 256.700" stroke="#30e030" stroke-width="1.200"/>
<g font-family="'Liberation Sans',sans-serif" font-style="italic" font-weight="bold" fill="#4c4c4c" fill-opacity="0.9" filter="url(#ntblur)">
<text transform="matrix(0.85,0.36,-0.55,0.5,1291.500,209.500)" font-size="10.5">Top</text>
<text transform="matrix(0.8,0.66,0,1,1261.800,246.800)" font-size="10">Front</text>
<text transform="matrix(0.8,-0.64,0,1,1308.500,264.500)" font-size="10">Right</text>
</g>
<text x="1244.500" y="207" font-family="'Liberation Sans',sans-serif" font-size="10.5" fill="#0a0aee">Z</text>
<text x="1298.500" y="300.500" font-family="'Liberation Sans',sans-serif" font-size="10.5" fill="#e0102a">X</text>
<!-- mini cube -->
<path d="M1334 283.500L1345 287.500V301L1334 305.500L1323.500 301V287.500Z" fill="#d8d8d8"/>
<path d="M1334 283.500L1345 287.500L1334 291.500L1323.500 287.500Z" fill="#eeeeee"/>
<path d="M1334 291.500L1345 287.500V301L1334 305.500Z" fill="#bcbcbc"/>
<path d="M1350 290.500H1363.500L1356.700 298.500Z" fill="#3c3c3c"/>

</g>
</svg>
</div>
<div class="abs" style="left:1383px;top:154px;width:61px;height:600px;overflow:hidden">
<div class="docktitle" style="left:1px;top:1px;width:70px"></div>
<div class="t" style="left:2.5px;top:3.5px;transform:scaleX(0.8706);">kicad ...</div>
<svg style="left:48px;top:6px" width="26" height="10" viewBox="0 0 26 10"><path d="M2.500 0.750h5.500v4.500M0.750 3.250h5.500v5.500h-5.500z" fill="none" stroke="#000" stroke-width="1.500"/></svg>
<div class="abs" style="left:9px;top:27px;width:26px;height:26px;background:#e1e1e1;border:1px solid #c4c4c4"></div>
<svg style="left:15.5px;top:33px" width="14" height="14" viewBox="0 0 14 14"><path d="M13.500 0.500V13.500L0.500 7z" fill="#808080"/></svg>
<div class="abs" style="left:41px;top:27px;width:26px;height:26px;background:#e1e1e1;border:1px solid #c4c4c4"></div>
<div class="abs" style="left:46px;top:32px;width:16px;height:15px;background:linear-gradient(180deg,#fdfdfd,#d4d4cf);box-shadow:2px 2px 1.500px #777"></div>
<div class="abs" style="left:6px;top:66px;width:70px;height:20px;background:#fff;border:1px solid #7a7a7a"></div>
<div class="t" style="left:49.3px;top:69.4px;font-size:12.5px;transform:scaleX(0.8991);">90</div>
<div class="abs" style="left:6px;top:107px;width:70px;height:20px;background:#fff;border:1px solid #7a7a7a"></div>
<div class="t" style="left:49.3px;top:110.4px;font-size:12.5px;transform:scaleX(0.8991);">90</div>
<div class="abs" style="left:6px;top:148px;width:70px;height:20px;background:#fff;border:1px solid #7a7a7a"></div>
<div class="t" style="left:49.3px;top:151.4px;font-size:12.5px;transform:scaleX(0.8991);">90</div>
<div class="abs" style="left:5px;top:186.5px;width:70px;height:20px;background:#fff;border:1px solid #7a7a7a"></div>
<div class="t" style="left:38.3px;top:189.9px;font-size:12.5px;transform:scaleX(0.8838);letter-spacing:.3px;">0.10</div>
<div class="abs" style="left:5px;top:227.5px;width:70px;height:20px;background:#fff;border:1px solid #7a7a7a"></div>
<div class="t" style="left:38.3px;top:230.9px;font-size:12.5px;transform:scaleX(0.8838);letter-spacing:.3px;">0.10</div>
<div class="abs" style="left:5px;top:268.5px;width:70px;height:20px;background:#fff;border:1px solid #7a7a7a"></div>
<div class="t" style="left:38.3px;top:271.9px;font-size:12.5px;transform:scaleX(0.8838);letter-spacing:.3px;">0.10</div>
<div class="abs" style="left:6px;top:303px;width:70px;height:34.5px;background:#e1e1e1;border:1px solid #c4c4c4"></div>
<div class="abs" style="left:6px;top:342px;width:70px;height:33.5px;background:#e1e1e1;border:1px solid #c4c4c4"></div>
<div class="abs" style="left:6px;top:380.5px;width:70px;height:34px;background:#e1e1e1;border:1px solid #c4c4c4"></div>
<div class="abs" style="left:6px;top:419px;width:70px;height:33.5px;background:#e1e1e1;border:1px solid #c4c4c4"></div>
<div class="abs" style="left:6px;top:457px;width:70px;height:33.5px;background:#e1e1e1;border:1px solid #c4c4c4"></div>
<svg style="left:22px;top:307px" width="26" height="27" viewBox="0 0 26 27"><rect x="1.500" y="8.500" width="22" height="11.500" rx="1.500" fill="#fff" stroke="#cfcfcf" stroke-width=".8"/><path d="M2 12.500a2 2 0 0 1 0 4" fill="none" stroke="#bbb" stroke-width=".8"/><g fill="#14c83c"><rect x="4" y="20" width="4" height="5.500"/><rect x="11" y="20" width="4" height="5.500"/><rect x="18" y="20" width="4" height="5.500"/><rect x="4" y="5" width="4" height="4"/><rect x="18" y="3.500" width="4" height="5.500"/></g><path d="M1 1.500C7 .5 12 2.500 14.500 6l2.500-2 1 8.500-8.500-1.500 2.500-2C9.500 6 6 5 1.500 5.500z" fill="#5bbf2a" stroke="#2d6e0e" stroke-width=".9" stroke-linejoin="round"/></svg>
<svg style="left:21.5px;top:346px" width="28" height="27" viewBox="0 0 28 27"><g fill="#e8e8e8" stroke="#666" stroke-width=".8"><rect x="3.500" y="1" width="5" height="5" rx="1.500"/><rect x="11" y="1" width="5" height="5" rx="1.500"/><rect x="18.500" y="1" width="5" height="5" rx="1.500"/><rect x="3.500" y="15" width="5" height="6"/></g><rect x="1" y="4" width="25" height="13.500" fill="#4d4d4d" stroke="#2a2a2a" stroke-width=".8"/><path d="M13.500 8l6-2.500 6.500 2v9l-6.500 3-6-2.500z" fill="#3f70b6" stroke="#1b3d6e" stroke-width=".7"/><path d="M13.500 8l6-2.500 6.500 2-6.500 2.500z" fill="#8ab2e6"/><path d="M19.500 10l6.500-2.500v9l-6.500 3z" fill="#2a5596"/><path d="M3.500 17.500c6-2 11-1 14.500 2.500l2.500-2.500 2 9-9-1 2.500-2.500c-2.500-2.500-6.500-3-11-1.500z" fill="#5bbf2a" stroke="#2d6e0e" stroke-width=".9" stroke-linejoin="round"/></svg>
<svg style="left:18.5px;top:382px" width="33" height="32" viewBox="0 0 33 32"><path d="M1 19.500L19 10.500l13 6.500v5.500L14 31.500 1 25z" fill="#e6a800" stroke="#8a6400" stroke-width=".8" stroke-linejoin="round"/><path d="M1 19.500L19 10.500l13 6.500-18 9z" fill="#fbcf2a" stroke="#8a6400" stroke-width=".7" stroke-linejoin="round"/><path d="M14 26v5.500" stroke="#8a6400" stroke-width=".7"/><path d="M1 19.500l13 6.500v5.500L1 25z" fill="#f6dc20"/><path d="M17 15l5-2.500 5 2.500-5 2.500z" fill="#f2b818" stroke="#c48a00" stroke-width=".6"/><path d="M8 19.500l3.500-1.700 4.500 2.200-3.500 1.800z" fill="#f2b818" stroke="#c48a00" stroke-width=".6"/><path d="M.5 1.500c6-2 12 .5 15 5l2.500-2 1 9.500-9-2 2.500-2c-2.500-3.500-6.500-5-11-4z" fill="#5bbf2a" stroke="#2d6e0e" stroke-width=".9" stroke-linejoin="round"/></svg>
<svg style="left:23.5px;top:424px" width="25" height="26" viewBox="0 0 25 26"><path d="M1.500 5v15c0 5 19.500 5 19.500 0V5z" fill="url(#gYelV)" stroke="#7a6a00" stroke-width=".8"/><ellipse cx="11.200" cy="5" rx="9.700" ry="3.800" fill="#fff27a" stroke="#7a6a00" stroke-width=".8"/><path d="M4.500 16c5.500-2 10.500-1 13.500 2.500l2.500-2 2.500 8.500-9-.5 2-2.500c-2-2.500-6-3.500-10.500-2z" fill="#5bbf2a" stroke="#2d6e0e" stroke-width=".9" stroke-linejoin="round"/></svg>
<svg style="left:22.5px;top:460.5px" width="25" height="26" viewBox="0 0 25 26"><rect x="1" y="1" width="23" height="24" rx="1" fill="#f7f7f7" stroke="#c4c4c4" stroke-width=".9"/><path d="M4 3.500h17" stroke="#d2d2d2" stroke-width="1.200"/><path d="M3.500 8.500l5-4.500 11.500 12.500-5 4.500z" fill="#f4d21c" stroke="#5a4a00" stroke-width=".8"/><path d="M5.200 7l11.500 12.500M7 5.500L18.500 18" stroke="#8a7200" stroke-width=".9"/><path d="M15 21l5-4.500 2.500 7.500z" fill="#e8dcc0" stroke="#3a3000" stroke-width=".7"/><path d="M20.500 21.500l2 2.500-3-1z" fill="#111"/></svg>
</div>
<div class="abs" style="left:276px;top:729px;width:401px;height:20px;border-bottom:1px solid #d9d9d9;border-left:1px solid #d9d9d9"></div>
<div class="abs" style="left:388px;top:729px;width:1px;height:20px;background:#d9d9d9"></div>
<div class="abs" style="left:541.5px;top:729px;width:1px;height:20px;background:#d9d9d9"></div>
<div class="abs" style="left:676.5px;top:728px;width:161px;height:23.500px;background:#fff;border:1px solid #e4e4e4;border-top:0"></div>
<svg style="left:284.5px;top:730.5px" width="16" height="16" viewBox="0 0 16 16"><path d="M1.200 0.800h9.300v3.300H5.300v2.700h3.400v3.100H5.300V15H1.200z" fill="#e21f26" stroke="#8e1116" stroke-width=".5"/><path d="M1.200 0.800h1.300V15H1.200z" fill="#a8141a"/><g transform="translate(10.6,9.900) scale(.82)"><path d="M-1-5.200h2l.3 1.300 1.200.5 1.200-.8 1.400 1.400-.8 1.200.5 1.200 1.400.3v2l-1.400.3-.5 1.200.8 1.200-1.400 1.400-1.200-.8-1.200.5-.3 1.400h-2l-.3-1.400-1.200-.5-1.200.8-1.400-1.400.8-1.200-.5-1.200-1.400-.3v-2l1.400-.3.5-1.200-.8-1.200 1.400-1.400 1.200.8 1.200-.5z" fill="#557fc4" stroke="#2c4f8c" stroke-width=".5"/><circle r="1.900" fill="#fff"/></g></svg>
<div class="t" style="left:304.3px;top:732.0px;transform:scaleX(0.9156);">Start page</div>
<svg style="left:360px;top:733px" width="14" height="14" viewBox="0 0 14 14"><rect x=".5" y=".5" width="13" height="13" rx="2" fill="#bdbdbd" stroke="#a8a8a8"/><path d="M4 4l6 6M10 4l-6 6" stroke="#fff" stroke-width="2" fill="none"/></svg>
<svg style="left:399px;top:730.5px" width="16" height="16" viewBox="0 0 16 16"><path d="M1.200 0.800h9.300v3.300H5.300v2.700h3.400v3.100H5.300V15H1.200z" fill="#e21f26" stroke="#8e1116" stroke-width=".5"/><path d="M1.200 0.800h1.300V15H1.200z" fill="#a8141a"/><g transform="translate(10.6,9.900) scale(.82)"><path d="M-1-5.200h2l.3 1.300 1.200.5 1.200-.8 1.400 1.400-.8 1.200.5 1.200 1.400.3v2l-1.400.3-.5 1.200.8 1.200-1.400 1.400-1.200-.8-1.200.5-.3 1.400h-2l-.3-1.400-1.200-.5-1.200.8-1.400-1.400.8-1.200-.5-1.200-1.400-.3v-2l1.400-.3.5-1.200-.8-1.200 1.400-1.400 1.200.8 1.200-.5z" fill="#557fc4" stroke="#2c4f8c" stroke-width=".5"/><circle r="1.900" fill="#fff"/></g></svg>
<div class="t" style="left:419.0px;top:732.0px;transform:scaleX(0.8926);">Doorbell Holder : 1</div>
<svg style="left:513.3px;top:733px" width="14" height="14" viewBox="0 0 14 14"><rect x=".5" y=".5" width="13" height="13" rx="2" fill="#bdbdbd" stroke="#a8a8a8"/><path d="M4 4l6 6M10 4l-6 6" stroke="#fff" stroke-width="2" fill="none"/></svg>
<svg style="left:552.5px;top:730.5px" width="16" height="16" viewBox="0 0 16 16"><path d="M1.200 0.800h9.300v3.300H5.300v2.700h3.400v3.100H5.300V15H1.200z" fill="#e21f26" stroke="#8e1116" stroke-width=".5"/><path d="M1.200 0.800h1.300V15H1.200z" fill="#a8141a"/><g transform="translate(10.6,9.900) scale(.82)"><path d="M-1-5.200h2l.3 1.300 1.200.5 1.200-.8 1.400 1.400-.8 1.200.5 1.200 1.400.3v2l-1.400.3-.5 1.200.8 1.200-1.400 1.400-1.200-.8-1.200.5-.3 1.400h-2l-.3-1.400-1.200-.5-1.200.8-1.400-1.400.8-1.200-.5-1.200-1.400-.3v-2l1.400-.3.5-1.200-.8-1.200 1.400-1.400 1.200.8 1.200-.5z" fill="#557fc4" stroke="#2c4f8c" stroke-width=".5"/><circle r="1.900" fill="#fff"/></g></svg>
<div class="t" style="left:572.0px;top:732.0px;transform:scaleX(0.9219);">Unnamed1 : 1*</div>
<svg style="left:650px;top:733px" width="14" height="14" viewBox="0 0 14 14"><rect x=".5" y=".5" width="13" height="13" rx="2" fill="#bdbdbd" stroke="#a8a8a8"/><path d="M4 4l6 6M10 4l-6 6" stroke="#fff" stroke-width="2" fill="none"/></svg>
<svg style="left:689.5px;top:730.5px" width="16" height="16" viewBox="0 0 16 16"><path d="M1.200 0.800h9.300v3.300H5.300v2.700h3.400v3.100H5.300V15H1.200z" fill="#e21f26" stroke="#8e1116" stroke-width=".5"/><path d="M1.200 0.800h1.300V15H1.200z" fill="#a8141a"/><g transform="translate(10.6,9.900) scale(.82)"><path d="M-1-5.200h2l.3 1.300 1.200.5 1.200-.8 1.400 1.400-.8 1.200.5 1.200 1.400.3v2l-1.400.3-.5 1.200.8 1.200-1.400 1.400-1.200-.8-1.200.5-.3 1.400h-2l-.3-1.400-1.200-.5-1.200.8-1.400-1.400.8-1.200-.5-1.200-1.400-.3v-2l1.400-.3.5-1.200-.8-1.200 1.400-1.400 1.200.8 1.200-.5z" fill="#557fc4" stroke="#2c4f8c" stroke-width=".5"/><circle r="1.900" fill="#fff"/></g></svg>
<div class="t" style="left:710.5px;top:732.0px;transform:scaleX(0.9207);">tomu_0.4_case : 1*</div>
<svg style="left:810.3px;top:733px" width="14" height="14" viewBox="0 0 14 14"><rect x=".5" y=".5" width="13" height="13" rx="2" fill="#e0543a" stroke="#c23c24"/><path d="M4 4l6 6M10 4l-6 6" stroke="#fff" stroke-width="2" fill="none"/></svg>
<div class="docktitle" style="left:1px;top:757px;width:1443px"></div>
<div class="t" style="left:2.4px;top:759.3px;transform:scaleX(0.8872);">Python console</div>
<svg style="left:1414px;top:762px" width="26" height="10" viewBox="0 0 26 10"><path d="M2.500 0.750h5.500v4.500M0.750 3.250h5.500v5.500h-5.500z" fill="none" stroke="#000" stroke-width="1.500"/><path d="M17 1.500l7 7M24 1.500l-7 7" stroke="#000" stroke-width="1.700" fill="none"/></svg>
<div class="abs" style="left:1px;top:777px;width:1443px;height:105px;border:1px solid #828790;background:#fff"></div>
<div class="t con" style="left:6.300px;top:780.1px"><span style="color:#a4a4a4">&gt;&gt;&gt; </span><span style="color:#1a1a1a">Gui</span><span style="color:#9a9aa6">.</span><span style="color:#1a1a1a">getDocument</span><span style="color:#9a9aa6">(</span><span style="color:#ff0000">"tomu_0_4_case"</span><span style="color:#9a9aa6">).</span><span style="color:#1a1a1a">getObject</span><span style="color:#9a9aa6">(</span><span style="color:#ff0000">"Sketch003"</span><span style="color:#9a9aa6">).</span><span style="color:#1a1a1a">Visibility</span><span style="color:#9a9aa6">=</span><span style="color:#1a1a1a">True</span></div>
<div class="t con" style="left:6.300px;top:796.1px"><span style="color:#a4a4a4">&gt;&gt;&gt; </span><span style="color:#1a1a1a">Gui</span><span style="color:#9a9aa6">.</span><span style="color:#1a1a1a">getDocument</span><span style="color:#9a9aa6">(</span><span style="color:#ff0000">"tomu_0_4_case"</span><span style="color:#9a9aa6">).</span><span style="color:#1a1a1a">getObject</span><span style="color:#9a9aa6">(</span><span style="color:#ff0000">"Pocket001"</span><span style="color:#9a9aa6">).</span><span style="color:#1a1a1a">Visibility</span><span style="color:#9a9aa6">=</span><span style="color:#1a1a1a">True</span></div>
<div class="t con" style="left:6.300px;top:812.1px"><span style="color:#a4a4a4">&gt;&gt;&gt; </span><span style="color:#1a1a1a">Gui</span><span style="color:#9a9aa6">.</span><span style="color:#1a1a1a">getDocument</span><span style="color:#9a9aa6">(</span><span style="color:#ff0000">"tomu_0_4_case"</span><span style="color:#9a9aa6">).</span><span style="color:#1a1a1a">getObject</span><span style="color:#9a9aa6">(</span><span style="color:#ff0000">"Pocket001"</span><span style="color:#9a9aa6">).</span><span style="color:#1a1a1a">Visibility</span><span style="color:#9a9aa6">=</span><span style="color:#1a1a1a">False</span></div>
<div class="t con" style="left:6.300px;top:828.1px"><span style="color:#a4a4a4">&gt;&gt;&gt; </span><span style="color:#1a1a1a">Gui</span><span style="color:#9a9aa6">.</span><span style="color:#1a1a1a">getDocument</span><span style="color:#9a9aa6">(</span><span style="color:#ff0000">"tomu_0_4_case"</span><span style="color:#9a9aa6">).</span><span style="color:#1a1a1a">getObject</span><span style="color:#9a9aa6">(</span><span style="color:#ff0000">"Sketch003"</span><span style="color:#9a9aa6">).</span><span style="color:#1a1a1a">Visibility</span><span style="color:#9a9aa6">=</span><span style="color:#1a1a1a">False</span></div>
<div class="t con" style="left:6.300px;top:844.1px"><span style="color:#a4a4a4">&gt;&gt;&gt; </span><span style="color:#1a1a1a">Gui</span><span style="color:#9a9aa6">.</span><span style="color:#1a1a1a">getDocument</span><span style="color:#9a9aa6">(</span><span style="color:#ff0000">"tomu_0_4_case"</span><span style="color:#9a9aa6">).</span><span style="color:#1a1a1a">getObject</span><span style="color:#9a9aa6">(</span><span style="color:#ff0000">"Pocket002"</span><span style="color:#9a9aa6">).</span><span style="color:#1a1a1a">Visibility</span><span style="color:#9a9aa6">=</span><span style="color:#1a1a1a">True</span></div>
<div class="t con" style="left:6.300px;top:860.1px"><span style="color:#a4a4a4">&gt;&gt;&gt; </span></div>
<div class="abs" style="left:1426px;top:778px;width:17px;height:103px;background:#f0f0f0"></div>
<div class="abs" style="left:1427px;top:845.500px;width:16px;height:18px;background:#cdcdcd"></div>
<svg style="left:1430px;top:784px" width="10" height="8" viewBox="0 0 10 8"><path d="M1 6l4-4 4 4" fill="none" stroke="#606060" stroke-width="1.500"/></svg>
<svg style="left:1430px;top:869px" width="10" height="8" viewBox="0 0 10 8"><path d="M1 2l4 4 4-4" fill="none" stroke="#606060" stroke-width="1.500"/></svg>
<div class="t" style="left:7.5px;top:889.8px;transform:scaleX(0.9674);">Valid, Internal name: Pad</div>
<svg style="left:1241px;top:889px" width="10" height="15" viewBox="0 0 10 15"><rect x="1" y="1" width="8" height="13" rx="3.500" fill="#fff" stroke="#333" stroke-width="1.500"/><path d="M5 3v3.500" stroke="#333" stroke-width="1.600"/></svg>
<div class="t" style="left:1258.4px;top:889.4px;transform:scaleX(0.8920);">CAD</div>
<svg style="left:1283px;top:894px" width="9" height="6" viewBox="0 0 9 6"><path d="M0 0.500h9L4.500 5.500z" fill="#000"/></svg>
<div class="abs" style="left:1299px;top:884px;width:1px;height:25px;background:#d0d0d0"></div>
<div class="abs" style="left:1425px;top:884px;width:1px;height:25px;background:#d0d0d0"></div>
<div class="t" style="left:1303.8px;top:889.4px;transform:scaleX(0.9683);">26.24 mm x 13.61 mm</div>
<svg style="left:1432px;top:900px" width="11" height="11" viewBox="0 0 11 11"><g fill="#b8b8b8"><rect x="8" y="0" width="2" height="2"/><rect x="4" y="4" width="2" height="2"/><rect x="8" y="4" width="2" height="2"/><rect x="0" y="8" width="2" height="2"/><rect x="4" y="8" width="2" height="2"/><rect x="8" y="8" width="2" height="2"/></g></svg>
<div id="win"></div>
</body>
</html>
